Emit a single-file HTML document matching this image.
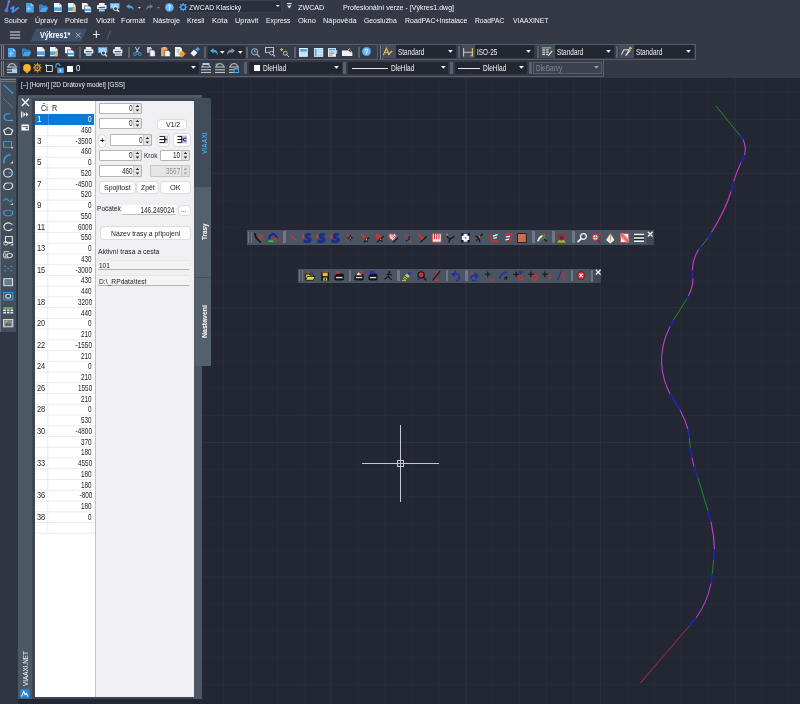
<!DOCTYPE html>
<html lang="cs"><head><meta charset="utf-8"><title>ZWCAD</title>
<style>
html,body{margin:0;padding:0;}
body{width:800px;height:704px;overflow:hidden;background:#222733;position:relative;font-family:"Liberation Sans",sans-serif;}
#r{position:absolute;left:0;top:0;width:800px;height:704px;overflow:hidden;will-change:transform;}
#r div,#r span,#r svg{position:absolute;display:block;}
#r span{white-space:nowrap;transform-origin:0 50%;filter:blur(0.25px);}
#r svg{filter:blur(0.25px);overflow:visible;}
</style></head>
<body><div id="r">
<svg style="left:0px;top:0px;" width="800" height="704" viewBox="0 0 800 704"><path d="M223.52 76V704" stroke="#282d39" stroke-width="1"/><path d="M250.44 76V704" stroke="#282d39" stroke-width="1"/><path d="M277.36 76V704" stroke="#282d39" stroke-width="1"/><path d="M304.28 76V704" stroke="#282d39" stroke-width="1"/><path d="M331.2 76V704" stroke="#2d3240" stroke-width="1"/><path d="M358.12 76V704" stroke="#282d39" stroke-width="1"/><path d="M385.04 76V704" stroke="#282d39" stroke-width="1"/><path d="M411.96 76V704" stroke="#282d39" stroke-width="1"/><path d="M438.88 76V704" stroke="#282d39" stroke-width="1"/><path d="M465.8 76V704" stroke="#2d3240" stroke-width="1"/><path d="M492.72 76V704" stroke="#282d39" stroke-width="1"/><path d="M519.64 76V704" stroke="#282d39" stroke-width="1"/><path d="M546.56 76V704" stroke="#282d39" stroke-width="1"/><path d="M573.48 76V704" stroke="#282d39" stroke-width="1"/><path d="M600.4 76V704" stroke="#2d3240" stroke-width="1"/><path d="M627.32 76V704" stroke="#282d39" stroke-width="1"/><path d="M654.24 76V704" stroke="#282d39" stroke-width="1"/><path d="M681.16 76V704" stroke="#282d39" stroke-width="1"/><path d="M708.08 76V704" stroke="#282d39" stroke-width="1"/><path d="M735 76V704" stroke="#2d3240" stroke-width="1"/><path d="M761.92 76V704" stroke="#282d39" stroke-width="1"/><path d="M788.84 76V704" stroke="#282d39" stroke-width="1"/><path d="M0 92.54H800" stroke="#282d39" stroke-width="1"/><path d="M0 119.46H800" stroke="#282d39" stroke-width="1"/><path d="M0 146.38H800" stroke="#282d39" stroke-width="1"/><path d="M0 173.3H800" stroke="#2d3240" stroke-width="1"/><path d="M0 200.22H800" stroke="#282d39" stroke-width="1"/><path d="M0 227.14H800" stroke="#282d39" stroke-width="1"/><path d="M0 254.06H800" stroke="#282d39" stroke-width="1"/><path d="M0 280.98H800" stroke="#282d39" stroke-width="1"/><path d="M0 307.9H800" stroke="#2d3240" stroke-width="1"/><path d="M0 334.82H800" stroke="#282d39" stroke-width="1"/><path d="M0 361.74H800" stroke="#282d39" stroke-width="1"/><path d="M0 388.66H800" stroke="#282d39" stroke-width="1"/><path d="M0 415.58H800" stroke="#282d39" stroke-width="1"/><path d="M0 442.5H800" stroke="#2d3240" stroke-width="1"/><path d="M0 469.42H800" stroke="#282d39" stroke-width="1"/><path d="M0 496.34H800" stroke="#282d39" stroke-width="1"/><path d="M0 523.26H800" stroke="#282d39" stroke-width="1"/><path d="M0 550.18H800" stroke="#282d39" stroke-width="1"/><path d="M0 577.1H800" stroke="#2d3240" stroke-width="1"/><path d="M0 604.02H800" stroke="#282d39" stroke-width="1"/><path d="M0 630.94H800" stroke="#282d39" stroke-width="1"/><path d="M0 657.86H800" stroke="#282d39" stroke-width="1"/><path d="M0 684.78H800" stroke="#282d39" stroke-width="1"/></svg>
<svg style="left:0px;top:0px;" width="800" height="704" viewBox="0 0 800 704"><path d="M716 106L740 135.5" stroke="#1f8f22" stroke-width="1" fill="none"/><path d="M740 135.5Q741.8 137.3 743 139.5" stroke="#1e26a4" stroke-width="2" fill="none"/><path d="M743 139.5Q746.6 146.5 744.5 155" stroke="#bd3cc6" stroke-width="1.15" fill="none"/><path d="M744.5 155Q743 158.5 741 162.5" stroke="#1e26a4" stroke-width="2" fill="none"/><path d="M741 162.5Q737 171 733.6 181.5" stroke="#bd3cc6" stroke-width="1.15" fill="none"/><path d="M733.6 181.5L731 191.5" stroke="#1e26a4" stroke-width="2" fill="none"/><path d="M731 191.5Q726 209 711.5 232.5" stroke="#bd3cc6" stroke-width="1.15" fill="none"/><path d="M711.5 232.5L708 238" stroke="#1e26a4" stroke-width="2" fill="none"/><path d="M708 238L701 246.5" stroke="#1f8f22" stroke-width="1" fill="none"/><path d="M701 246.5L698.6 249.5" stroke="#1e26a4" stroke-width="2" fill="none"/><path d="M698.6 249.5Q693 258 692.4 270" stroke="#bd3cc6" stroke-width="1.15" fill="none"/><path d="M692.4 270L692.9 278.5" stroke="#1e26a4" stroke-width="2" fill="none"/><path d="M692.9 278.5Q693.2 287 688.3 296" stroke="#bd3cc6" stroke-width="1.15" fill="none"/><path d="M688.3 296L687 298.8" stroke="#1e26a4" stroke-width="2" fill="none"/><path d="M687 298.8L673.5 320" stroke="#1f8f22" stroke-width="1" fill="none"/><path d="M673.5 320L670 326.5" stroke="#1e26a4" stroke-width="2" fill="none"/><path d="M670 326.5Q660.6 345 661.6 364Q662.5 379 670 394" stroke="#bd3cc6" stroke-width="1.15" fill="none"/><path d="M670 394L680 410" stroke="#1e26a4" stroke-width="2" fill="none"/><path d="M680 410Q685.4 420 688 429.5" stroke="#bd3cc6" stroke-width="1.15" fill="none"/><path d="M688 429.5L689.3 438" stroke="#1e26a4" stroke-width="2" fill="none"/><path d="M689.3 438L690.4 448" stroke="#1f8f22" stroke-width="1" fill="none"/><path d="M690.4 448L692 458" stroke="#1e26a4" stroke-width="2" fill="none"/><path d="M692 458L694 466.5" stroke="#bd3cc6" stroke-width="1.15" fill="none"/><path d="M694 466.5L698 478" stroke="#1e26a4" stroke-width="2" fill="none"/><path d="M698 478L708 511" stroke="#1f8f22" stroke-width="1" fill="none"/><path d="M708 511L711 522" stroke="#1e26a4" stroke-width="2" fill="none"/><path d="M711 522Q714.2 536 714.4 549" stroke="#bd3cc6" stroke-width="1.15" fill="none"/><path d="M714.4 549L713.6 560" stroke="#1e26a4" stroke-width="2" fill="none"/><path d="M713.6 560L712.4 573.5" stroke="#1f8f22" stroke-width="1" fill="none"/><path d="M712.4 573.5L711 583.5" stroke="#1e26a4" stroke-width="2" fill="none"/><path d="M711 583.5Q707 603 696 618" stroke="#bd3cc6" stroke-width="1.15" fill="none"/><path d="M696 618L689.6 625.6" stroke="#1e26a4" stroke-width="2" fill="none"/><path d="M689.6 625.6L640.4 683" stroke="#b42e2e" stroke-width="1" fill="none"/></svg>
<svg style="left:0px;top:0px;" width="800" height="704" viewBox="0 0 800 704"><path d="M400.5 425V502M362 463.5H439" stroke="#c6cad0" stroke-width="1"/><rect x="397.5" y="460.5" width="6" height="6" fill="none" stroke="#c6cad0" stroke-width="1"/></svg>
<span id="t0" style="left:20.6px;top:80.02px;font-size:7.8px;line-height:9px;color:#eef0f2;font-weight:normal;transform:scaleX(0.8231);">[&#8211;] [Horní] [2D Drátový model] [GSS]</span>
<div style="left:0px;top:0px;width:800px;height:77.7px;background:#343945;"></div>
<div style="left:176.7px;top:0px;width:105.8px;height:13.4px;background:#2a303b;box-sizing:border-box;border:1px solid #3a414d;"></div>
<span id="t1" style="left:188.6px;top:3.02px;font-size:7.8px;line-height:9px;color:#f2f3f5;font-weight:normal;transform:scaleX(0.8811);">ZWCAD Klasický</span>
<svg style="left:275.5px;top:5.46px;" width="3.6" height="2.09" viewBox="0 0 3.6 2.09"><path d="M0 0H3.6L1.8 2.09Z" fill="#fff"/></svg>
<span id="t2" style="left:298.3px;top:2.52px;font-size:8px;line-height:10px;color:#f6f7f8;font-weight:normal;transform:scaleX(0.8968);">ZWCAD</span>
<span id="t3" style="left:343.3px;top:2.52px;font-size:8px;line-height:10px;color:#f6f7f8;font-weight:normal;transform:scaleX(0.8828);">Profesionální verze - [Výkres1.dwg]</span>
<span id="t4" style="left:4px;top:15.52px;font-size:8.1px;line-height:10px;color:#f6f7f8;font-weight:normal;transform:scaleX(0.8962);">Soubor</span>
<span id="t5" style="left:35px;top:15.52px;font-size:8.1px;line-height:10px;color:#f6f7f8;font-weight:normal;transform:scaleX(0.8814);">Úpravy</span>
<span id="t6" style="left:65.2px;top:15.52px;font-size:8.1px;line-height:10px;color:#f6f7f8;font-weight:normal;transform:scaleX(0.9046);">Pohled</span>
<span id="t7" style="left:95.6px;top:15.52px;font-size:8.1px;line-height:10px;color:#f6f7f8;font-weight:normal;transform:scaleX(0.9496);">Vložit</span>
<span id="t8" style="left:121.4px;top:15.52px;font-size:8.1px;line-height:10px;color:#f6f7f8;font-weight:normal;transform:scaleX(0.9360);">Formát</span>
<span id="t9" style="left:152.6px;top:15.52px;font-size:8.1px;line-height:10px;color:#f6f7f8;font-weight:normal;transform:scaleX(0.8958);">Nástroje</span>
<span id="t10" style="left:187.2px;top:15.52px;font-size:8.1px;line-height:10px;color:#f6f7f8;font-weight:normal;transform:scaleX(0.8593);">Kresli</span>
<span id="t11" style="left:212.2px;top:15.52px;font-size:8.1px;line-height:10px;color:#f6f7f8;font-weight:normal;transform:scaleX(0.9426);">Kóta</span>
<span id="t12" style="left:235.1px;top:15.52px;font-size:8.1px;line-height:10px;color:#f6f7f8;font-weight:normal;transform:scaleX(0.9087);">Upravit</span>
<span id="t13" style="left:266px;top:15.52px;font-size:8.1px;line-height:10px;color:#f6f7f8;font-weight:normal;transform:scaleX(0.8342);">Express</span>
<span id="t14" style="left:297.6px;top:15.52px;font-size:8.1px;line-height:10px;color:#f6f7f8;font-weight:normal;transform:scaleX(0.9298);">Okno</span>
<span id="t15" style="left:323.2px;top:15.52px;font-size:8.1px;line-height:10px;color:#f6f7f8;font-weight:normal;transform:scaleX(0.9104);">Nápověda</span>
<span id="t16" style="left:363.9px;top:15.52px;font-size:8.1px;line-height:10px;color:#f6f7f8;font-weight:normal;transform:scaleX(0.8449);">Geoslužba</span>
<span id="t17" style="left:404.6px;top:15.52px;font-size:8.1px;line-height:10px;color:#f6f7f8;font-weight:normal;transform:scaleX(0.8591);">RoadPAC+Instalace</span>
<span id="t18" style="left:475.1px;top:15.52px;font-size:8.1px;line-height:10px;color:#f6f7f8;font-weight:normal;transform:scaleX(0.8279);">RoadPAC</span>
<span id="t19" style="left:513.1px;top:15.52px;font-size:8.1px;line-height:10px;color:#f6f7f8;font-weight:normal;transform:scaleX(0.8349);">VIAAXINET</span>
<svg style="left:10px;top:29px;" width="11" height="10" viewBox="0 0 11 10"><path d="M0 3H10.2M0 6H10.2M0 9H10.2" stroke="#dfe2e6" stroke-width="1.2"/></svg>
<svg style="left:30px;top:27.5px;" width="60" height="14" viewBox="0 0 60 14"><path d="M6 0.6H57L51.2 13.6H0.6Z" fill="#3e516b"/></svg>
<span id="t20" style="left:39.6px;top:30.02px;font-size:8.4px;line-height:10px;color:#fff;font-weight:bold;transform:scaleX(0.8558);">Výkres1*</span>
<svg style="left:74.5px;top:32px;" width="7" height="7" viewBox="0 0 7 7"><path d="M0.8 0.8L5.6 5.6M5.6 0.8L0.8 5.6" stroke="#aeb6c2" stroke-width="1"/></svg>
<span style="left:92.3px;top:27.2px;font-size:14px;line-height:14px;color:#e6e8ea;">+</span>
<svg style="left:106px;top:30px;" width="6" height="10" viewBox="0 0 6 10"><path d="M4.6 0.5L1 9.5" stroke="#59616d" stroke-width="1"/></svg>
<div style="left:0px;top:43.6px;width:377.5px;height:16.4px;background:#363b47;box-sizing:border-box;border:1px solid #565e6b;border-left:none;"></div>
<div style="left:378.5px;top:43.6px;width:317px;height:16.4px;background:#363b47;box-sizing:border-box;border:1px solid #565e6b;border-left:none;"></div>
<div style="left:0px;top:60px;width:604px;height:16.5px;background:#363b47;box-sizing:border-box;border:1px solid #565e6b;border-left:none;border-top:none;"></div>
<div style="left:1.3px;top:44.6px;width:0.8px;height:14.6px;background:#7a828e;"></div>
<div style="left:3.1px;top:44.6px;width:0.8px;height:14.6px;background:#7a828e;"></div>
<div style="left:379.8px;top:44.6px;width:0.8px;height:14.6px;background:#7a828e;"></div>
<div style="left:381.6px;top:44.6px;width:0.8px;height:14.6px;background:#7a828e;"></div>
<div style="left:1.3px;top:60.8px;width:0.8px;height:15px;background:#7a828e;"></div>
<div style="left:3.1px;top:60.8px;width:0.8px;height:15px;background:#7a828e;"></div>
<div style="left:6px;top:61.8px;width:12.4px;height:12.4px;background:#414955;"></div>
<div style="left:79px;top:46.5px;width:2px;height:11px;background:#59616d;"></div>
<div style="left:127.6px;top:46.5px;width:2px;height:11px;background:#59616d;"></div>
<div style="left:204.4px;top:46.5px;width:2px;height:11px;background:#59616d;"></div>
<div style="left:245.5px;top:46.5px;width:2px;height:11px;background:#59616d;"></div>
<div style="left:293.6px;top:46.5px;width:2px;height:11px;background:#59616d;"></div>
<div style="left:357.5px;top:46.5px;width:2px;height:11px;background:#59616d;"></div>
<div style="left:208px;top:45.5px;width:36.5px;height:13px;background:#262b35;"></div>
<svg style="left:219.7px;top:50.8px;" width="4.6" height="2.8" viewBox="0 0 4.6 2.8"><path d="M0 0H4.6L2.3 2.8Z" fill="#fff"/></svg>
<svg style="left:237.7px;top:50.8px;" width="4.6" height="2.8" viewBox="0 0 4.6 2.8"><path d="M0 0H4.6L2.3 2.8Z" fill="#fff"/></svg>
<div style="left:381.5px;top:45.3px;width:14.5px;height:13.2px;background:#454d59;"></div>
<div style="left:396px;top:45.4px;width:59.5px;height:12.6px;background:#222731;"></div>
<span id="t21" style="left:397.6px;top:47.52px;font-size:8.2px;line-height:10px;color:#f2f3f5;font-weight:normal;transform:scaleX(0.7913);">Standard</span>
<svg style="left:447.9px;top:50.11px;" width="4.8" height="2.78" viewBox="0 0 4.8 2.78"><path d="M0 0H4.8L2.4 2.78Z" fill="#fff"/></svg>
<div style="left:458px;top:46px;width:2px;height:12px;background:#59616d;"></div>
<div style="left:461.5px;top:45.3px;width:13.5px;height:13.2px;background:#454d59;"></div>
<div style="left:475px;top:45.4px;width:59px;height:12.6px;background:#222731;"></div>
<span id="t22" style="left:477.1px;top:47.52px;font-size:8.2px;line-height:10px;color:#f2f3f5;font-weight:normal;transform:scaleX(0.7822);">ISO-25</span>
<svg style="left:526.4px;top:50.11px;" width="4.8" height="2.78" viewBox="0 0 4.8 2.78"><path d="M0 0H4.8L2.4 2.78Z" fill="#fff"/></svg>
<div style="left:537px;top:46px;width:2px;height:12px;background:#59616d;"></div>
<div style="left:540px;top:45.3px;width:15px;height:13.2px;background:#454d59;"></div>
<div style="left:555px;top:45.4px;width:59px;height:12.6px;background:#222731;"></div>
<span id="t23" style="left:556.6px;top:47.52px;font-size:8.2px;line-height:10px;color:#f2f3f5;font-weight:normal;transform:scaleX(0.7913);">Standard</span>
<svg style="left:606.4px;top:50.11px;" width="4.8" height="2.78" viewBox="0 0 4.8 2.78"><path d="M0 0H4.8L2.4 2.78Z" fill="#fff"/></svg>
<div style="left:616px;top:46px;width:2px;height:12px;background:#59616d;"></div>
<div style="left:619px;top:45.3px;width:15px;height:13.2px;background:#454d59;"></div>
<div style="left:634px;top:45.4px;width:59.5px;height:12.6px;background:#222731;"></div>
<span id="t24" style="left:635.6px;top:47.52px;font-size:8.2px;line-height:10px;color:#f2f3f5;font-weight:normal;transform:scaleX(0.7913);">Standard</span>
<svg style="left:685.9px;top:50.11px;" width="4.8" height="2.78" viewBox="0 0 4.8 2.78"><path d="M0 0H4.8L2.4 2.78Z" fill="#fff"/></svg>
<div style="left:20px;top:61.6px;width:178.5px;height:12.2px;background:#222731;"></div>
<span id="t25" style="left:76.4px;top:63.52px;font-size:8.2px;line-height:10px;color:#f2f3f5;font-weight:normal;transform:scaleX(0.9644);">0</span>
<svg style="left:190.9px;top:66.11px;" width="4.8" height="2.78" viewBox="0 0 4.8 2.78"><path d="M0 0H4.8L2.4 2.78Z" fill="#fff"/></svg>
<div style="left:243.8px;top:62px;width:3px;height:12.4px;background:#59616d;"></div>
<div style="left:249px;top:61.6px;width:92.5px;height:12.2px;background:#222731;"></div>
<span id="t26" style="left:262.6px;top:63.52px;font-size:8.2px;line-height:10px;color:#f2f3f5;font-weight:normal;transform:scaleX(0.8000);">DleHlad</span>
<svg style="left:333.9px;top:66.11px;" width="4.8" height="2.78" viewBox="0 0 4.8 2.78"><path d="M0 0H4.8L2.4 2.78Z" fill="#fff"/></svg>
<div style="left:253.8px;top:64.8px;width:6.4px;height:6.4px;background:#fff;"></div>
<div style="left:342.6px;top:62px;width:3px;height:12.4px;background:#59616d;"></div>
<div style="left:347.6px;top:61.6px;width:100.9px;height:12.2px;background:#222731;"></div>
<span id="t27" style="left:390.6px;top:63.52px;font-size:8.2px;line-height:10px;color:#f2f3f5;font-weight:normal;transform:scaleX(0.8000);">DleHlad</span>
<svg style="left:440.9px;top:66.11px;" width="4.8" height="2.78" viewBox="0 0 4.8 2.78"><path d="M0 0H4.8L2.4 2.78Z" fill="#fff"/></svg>
<div style="left:351.5px;top:68px;width:36.5px;height:0.9px;background:#e6e8ea;"></div>
<div style="left:449.6px;top:62px;width:3px;height:12.4px;background:#59616d;"></div>
<div style="left:454.5px;top:61.6px;width:72px;height:12.2px;background:#222731;"></div>
<span id="t28" style="left:482.6px;top:63.52px;font-size:8.2px;line-height:10px;color:#f2f3f5;font-weight:normal;transform:scaleX(0.8000);">DleHlad</span>
<svg style="left:518.9px;top:66.11px;" width="4.8" height="2.78" viewBox="0 0 4.8 2.78"><path d="M0 0H4.8L2.4 2.78Z" fill="#fff"/></svg>
<div style="left:458px;top:68px;width:21.8px;height:0.9px;background:#e6e8ea;"></div>
<div style="left:528.8px;top:62px;width:3px;height:12.4px;background:#59616d;"></div>
<div style="left:533px;top:61.6px;width:69px;height:12.2px;background:#3b424e;box-sizing:border-box;border:1px solid #59616d;"></div>
<span id="t29" style="left:535.6px;top:63.52px;font-size:8.2px;line-height:10px;color:#7f8794;font-weight:normal;transform:scaleX(0.7917);">DleBarvy</span>
<svg style="left:594.4px;top:66.11px;" width="4.8" height="2.78" viewBox="0 0 4.8 2.78"><path d="M0 0H4.8L2.4 2.78Z" fill="#9aa1ac"/></svg>
<div style="left:0px;top:77.7px;width:17.6px;height:627px;background:#2f3641;"></div>
<div style="left:0px;top:77.9px;width:16.2px;height:253.7px;background:#444d5a;"></div>
<div style="left:0px;top:77.9px;width:0.9px;height:253.7px;background:#667080;"></div>
<div style="left:0.8px;top:79px;width:14.8px;height:0.9px;background:#7b838e;"></div>
<div style="left:0.8px;top:80.9px;width:14.8px;height:0.9px;background:#6b7480;"></div>
<svg style="left:4px;top:0px" width="15.6" height="13.4" viewBox="0 0 15.6 13.4"><path d="M4.8 1.4L2.8 9.8" stroke="#5a74f0" stroke-width="1.8" fill="none"/><circle cx="4.9" cy="1.5" r="1.3" fill="#6a84f5"/><circle cx="2.4" cy="10.6" r="2" fill="#5270ea"/><path d="M6.4 9L9.6 6.8L8.6 12L14.8 7.6" stroke="#468ee6" stroke-width="1.9" fill="none" stroke-linejoin="round"/></svg>
<svg style="left:25.8px;top:2.8px" width="7.8" height="9.4" viewBox="0 0 10 10" preserveAspectRatio="none"><path d="M0 0H6.4L10 3V10H0Z" fill="#4aa3e8"/><path d="M6.4 0L10 3H6.4Z" fill="#9fd0f7"/><path d="M3.6 3.6V8.6M1.2 6.1H6" stroke="#9fd0f7" stroke-width="1.3"/></svg>
<svg style="left:39px;top:3.6px" width="9.4" height="8" viewBox="0 0 10 10" preserveAspectRatio="none"><path d="M0 0.6H3.6L4.6 2H8.6V4H2.4L0 9.4Z" fill="#2f86d0"/><path d="M2.8 4.2H10L7.6 10H0.2Z" fill="#4aa3e8"/></svg>
<svg style="left:54px;top:3px" width="7.6" height="9" viewBox="0 0 10 10" preserveAspectRatio="none"><path d="M0 0H7L10 2.6V10H0Z" fill="#f1f3f5"/><rect x="0" y="4.8" width="10" height="4" fill="#4aa3e8"/><rect x="6.6" y="0" width="1" height="2.4" fill="#aeb6c2"/></svg>
<svg style="left:68px;top:3px" width="7.6" height="9" viewBox="0 0 10 10" preserveAspectRatio="none"><path d="M0 0H7L10 2.6V10H0Z" fill="#f1f3f5"/><rect x="0" y="4.8" width="10" height="4" fill="#4aa3e8"/><rect x="6.6" y="0" width="1" height="2.4" fill="#aeb6c2"/><path d="M6.4 6.2L10 5L9.4 10L5.6 9.4Z" fill="#f0c040"/></svg>
<svg style="left:82px;top:2.8px" width="9.2" height="9.6" viewBox="0 0 10 10" preserveAspectRatio="none"><path d="M0 0H5L6.6 1.6V6.4H0Z" fill="#f1f3f5"/><path d="M2.8 3H8L10 5V10H2.8Z" fill="#f1f3f5" stroke="#333a46" stroke-width="0.6"/><rect x="2.8" y="6" width="7.2" height="2.2" fill="#4aa3e8"/></svg>
<svg style="left:96.6px;top:3.3px" width="9.6" height="8.4" viewBox="0 0 10 10" preserveAspectRatio="none"><rect x="2" y="0" width="6" height="2.6" fill="#f1f3f5"/><rect x="0" y="2.4" width="10" height="4.8" rx="0.8" fill="#f1f3f5"/><rect x="1.6" y="4.6" width="6.8" height="1.2" fill="#3a4250"/><rect x="2" y="6" width="6" height="4" fill="#9fd0f7"/><rect x="2.8" y="7.4" width="4.4" height="1" fill="#4aa3e8"/></svg>
<svg style="left:110.2px;top:3px" width="9.6" height="8.8" viewBox="0 0 10 10" preserveAspectRatio="none"><rect x="0" y="0" width="10" height="6.4" fill="#4aa3e8"/><rect x="0.9" y="1" width="8.2" height="4.4" fill="#9fd0f7"/><circle cx="5.8" cy="6.4" r="2.2" fill="#3a4250" stroke="#f1f3f5" stroke-width="1"/><path d="M7.4 8L9.6 10" stroke="#f1f3f5" stroke-width="1.3"/></svg>
<svg style="left:126px;top:4.2px" width="7.6" height="6.2" viewBox="0 0 10 10" preserveAspectRatio="none"><path d="M0 4L4.4 0V2.6Q10 2.6 10 10Q8 5.6 4.4 5.6V8Z" fill="#4aa3e8"/></svg>
<svg style="left:137.8px;top:6.6px;" width="2.8" height="1.8" viewBox="0 0 2.8 1.8"><path d="M0 0H2.8L1.4 1.8Z" fill="#dfe2e6"/></svg>
<svg style="left:145.8px;top:4.2px" width="7.2" height="6.2" viewBox="0 0 10 10" preserveAspectRatio="none"><path d="M10 4L5.6 0V2.6Q0 2.6 0 10Q2 5.6 5.6 5.6V8Z" fill="#6d7683"/></svg>
<svg style="left:157.2px;top:6.6px;" width="2.8" height="1.8" viewBox="0 0 2.8 1.8"><path d="M0 0H2.8L1.4 1.8Z" fill="#7c8592"/></svg>
<svg style="left:164.8px;top:2.6px" width="8.8" height="8.8" viewBox="0 0 10 10" preserveAspectRatio="none"><circle cx="5" cy="5" r="5" fill="#4aa3e8"/><circle cx="5" cy="5" r="3.9" fill="#6db9f2"/><path d="M3.6 4Q3.6 2.4 5 2.4Q6.5 2.4 6.5 3.8Q6.5 4.8 5 5.4V6.3" stroke="#fff" stroke-width="1" fill="none"/><rect x="4.5" y="7" width="1" height="1" fill="#fff"/></svg>
<svg style="left:178.8px;top:2.6px" width="8.4" height="8.4" viewBox="0 0 10 10" preserveAspectRatio="none"><rect x="4.2" y="0" width="1.6" height="10" fill="#4aa3e8" transform="rotate(0 5 5)"/><rect x="4.2" y="0" width="1.6" height="10" fill="#4aa3e8" transform="rotate(45 5 5)"/><rect x="4.2" y="0" width="1.6" height="10" fill="#4aa3e8" transform="rotate(90 5 5)"/><rect x="4.2" y="0" width="1.6" height="10" fill="#4aa3e8" transform="rotate(135 5 5)"/><circle cx="5" cy="5" r="3.4" fill="#4aa3e8"/><circle cx="5" cy="5" r="1.9" fill="#2a303b"/></svg>
<svg style="left:286.6px;top:3.4px;" width="5" height="7" viewBox="0 0 5 7"><rect x="0" y="0" width="4.6" height="1.2" fill="#dfe2e6"/><path d="M0 2.6H4.6L2.3 5.6Z" fill="#dfe2e6"/></svg>
<svg style="left:8.2px;top:47.6px" width="7.8" height="9.2" viewBox="0 0 10 10" preserveAspectRatio="none"><path d="M0 0H6.4L10 3V10H0Z" fill="#4aa3e8"/><path d="M6.4 0L10 3H6.4Z" fill="#9fd0f7"/><path d="M3.6 3.6V8.6M1.2 6.1H6" stroke="#9fd0f7" stroke-width="1.3"/></svg>
<svg style="left:22px;top:47.8px" width="9.4" height="8.2" viewBox="0 0 10 10" preserveAspectRatio="none"><path d="M0 0.6H3.6L4.6 2H8.6V4H2.4L0 9.4Z" fill="#2f86d0"/><path d="M2.8 4.2H10L7.6 10H0.2Z" fill="#4aa3e8"/></svg>
<svg style="left:37px;top:47.2px" width="7.6" height="9.2" viewBox="0 0 10 10" preserveAspectRatio="none"><path d="M0 0H7L10 2.6V10H0Z" fill="#f1f3f5"/><rect x="0" y="4.8" width="10" height="4" fill="#4aa3e8"/><rect x="6.6" y="0" width="1" height="2.4" fill="#aeb6c2"/></svg>
<svg style="left:50.4px;top:47.2px" width="7.6" height="9.2" viewBox="0 0 10 10" preserveAspectRatio="none"><path d="M0 0H7L10 2.6V10H0Z" fill="#f1f3f5"/><rect x="0" y="4.8" width="10" height="4" fill="#4aa3e8"/><rect x="6.6" y="0" width="1" height="2.4" fill="#aeb6c2"/><path d="M6.4 6.2L10 5L9.4 10L5.6 9.4Z" fill="#f0c040"/></svg>
<svg style="left:65px;top:47px" width="9.2" height="9.6" viewBox="0 0 10 10" preserveAspectRatio="none"><path d="M0 0H5L6.6 1.6V6.4H0Z" fill="#f1f3f5"/><path d="M2.8 3H8L10 5V10H2.8Z" fill="#f1f3f5" stroke="#333a46" stroke-width="0.6"/><rect x="2.8" y="6" width="7.2" height="2.2" fill="#4aa3e8"/></svg>
<svg style="left:84px;top:47.4px" width="9.4" height="9" viewBox="0 0 10 10" preserveAspectRatio="none"><rect x="2" y="0" width="6" height="2.6" fill="#f1f3f5"/><rect x="0" y="2.4" width="10" height="4.8" rx="0.8" fill="#f1f3f5"/><rect x="1.6" y="4.6" width="6.8" height="1.2" fill="#3a4250"/><rect x="2" y="6" width="6" height="4" fill="#9fd0f7"/><rect x="2.8" y="7.4" width="4.4" height="1" fill="#4aa3e8"/></svg>
<svg style="left:98.4px;top:47.2px" width="9.4" height="9.4" viewBox="0 0 10 10" preserveAspectRatio="none"><rect x="0" y="0" width="10" height="6.4" fill="#4aa3e8"/><rect x="0.9" y="1" width="8.2" height="4.4" fill="#9fd0f7"/><circle cx="5.8" cy="6.4" r="2.2" fill="#3a4250" stroke="#f1f3f5" stroke-width="1"/><path d="M7.4 8L9.6 10" stroke="#f1f3f5" stroke-width="1.3"/></svg>
<svg style="left:113px;top:47.4px" width="9.4" height="9" viewBox="0 0 10 10" preserveAspectRatio="none"><rect x="2" y="0" width="6" height="2.6" fill="#f1f3f5"/><rect x="0" y="2.4" width="10" height="4.8" rx="0.8" fill="#f1f3f5"/><rect x="1.6" y="4.6" width="6.8" height="1.2" fill="#3a4250"/><rect x="2" y="6" width="6" height="4" fill="#9fd0f7"/><rect x="2.8" y="7.4" width="4.4" height="1" fill="#4aa3e8"/><circle cx="8.6" cy="8.8" r="1.2" fill="#f0c040"/></svg>
<svg style="left:133px;top:47.4px" width="8.6" height="9.2" viewBox="0 0 10 10" preserveAspectRatio="none"><path d="M2.6 0L6.4 6M7.4 0L3.6 6" stroke="#9fd0f7" stroke-width="1.1" fill="none"/><circle cx="2.2" cy="7.7" r="1.6" fill="none" stroke="#4aa3e8" stroke-width="1"/><circle cx="7.8" cy="7.7" r="1.6" fill="none" stroke="#4aa3e8" stroke-width="1"/></svg>
<svg style="left:147.4px;top:47px" width="8.2" height="9.6" viewBox="0 0 10 10" preserveAspectRatio="none"><path d="M0 0H4.6L6 1.6V6H0Z" fill="#c6cbd3"/><path d="M3.4 3H8.2L10 5V10H3.4Z" fill="#f1f3f5" stroke="#363d49" stroke-width="0.7"/></svg>
<svg style="left:161px;top:47px" width="9.2" height="9.6" viewBox="0 0 10 10" preserveAspectRatio="none"><rect x="0" y="0.6" width="7" height="9" rx="0.6" fill="#e8a055"/><rect x="2" y="0" width="3" height="1.6" fill="#c6cbd3"/><path d="M4 3.6H8.4L10 5.4V10H4Z" fill="#f1f3f5" stroke="#363d49" stroke-width="0.6"/></svg>
<svg style="left:175.4px;top:47px" width="10" height="9.8" viewBox="0 0 10 10" preserveAspectRatio="none"><path d="M0 0H5.2L7 1.8V9.6H0Z" fill="#f1f3f5"/><path d="M1.4 3H5M1.4 5H4.4" stroke="#8d96a3" stroke-width="0.8"/><circle cx="7" cy="7" r="2.6" fill="#f0a830"/><circle cx="7" cy="7" r="1" fill="#363d49"/><path d="M7 3.6V10.4M3.6 7H10.4" stroke="#f0a830" stroke-width="1.1"/></svg>
<svg style="left:190px;top:47px" width="10" height="9.6" viewBox="0 0 10 10" preserveAspectRatio="none"><path d="M0.4 6.4L4 2.6L7.4 6L3.8 9.8Z" fill="#f1f3f5"/><path d="M5.2 2.4L7.6 0L10 2.4L7.6 4.8Z" fill="#4aa3e8"/></svg>
<svg style="left:209.6px;top:48.4px" width="8" height="7" viewBox="0 0 10 10" preserveAspectRatio="none"><path d="M0 4L4.4 0V2.6Q10 2.6 10 10Q8 5.6 4.4 5.6V8Z" fill="#4aa3e8"/></svg>
<svg style="left:227.4px;top:48.4px" width="8" height="7" viewBox="0 0 10 10" preserveAspectRatio="none"><path d="M10 4L5.6 0V2.6Q0 2.6 0 10Q2 5.6 5.6 5.6V8Z" fill="#8790a0"/></svg>
<svg style="left:251px;top:47.8px" width="8.8" height="9" viewBox="0 0 10 10" preserveAspectRatio="none"><circle cx="4.2" cy="4.2" r="3.5" fill="none" stroke="#9fd0f7" stroke-width="1"/><path d="M4.2 2V4.4H6" stroke="#9fd0f7" stroke-width="0.9" fill="none"/><path d="M6.8 7L9.6 9.8" stroke="#c6cbd3" stroke-width="1.2"/></svg>
<svg style="left:265px;top:47.4px" width="10" height="9.4" viewBox="0 0 10 10" preserveAspectRatio="none"><rect x="0.5" y="0.5" width="8" height="5.2" fill="none" stroke="#c6cbd3" stroke-width="1"/><circle cx="6.6" cy="6.4" r="2" fill="#363d49" stroke="#c6cbd3" stroke-width="0.9"/><path d="M8 8L10 10" stroke="#c6cbd3" stroke-width="1.1"/></svg>
<svg style="left:280px;top:47.6px" width="9" height="9" viewBox="0 0 10 10" preserveAspectRatio="none"><path d="M1.8 0V3.6M0 1.8H3.6" stroke="#f0c040" stroke-width="1"/><circle cx="5.8" cy="5.8" r="2.2" fill="none" stroke="#c6cbd3" stroke-width="1"/><path d="M7.4 7.4L10 10" stroke="#c6cbd3" stroke-width="1.1"/></svg>
<svg style="left:299.4px;top:48px" width="8.8" height="8.8" viewBox="0 0 10 10" preserveAspectRatio="none"><rect width="10" height="10" fill="#f1f3f5"/><rect x="1" y="1.2" width="8" height="3" fill="#4aa3e8"/><path d="M1 5.8H9M1 7.8H9" stroke="#9fd0f7" stroke-width="1"/></svg>
<svg style="left:314px;top:48px" width="9.2" height="8.8" viewBox="0 0 10 10" preserveAspectRatio="none"><rect width="10" height="10" fill="#f1f3f5"/><rect x="3.6" y="0.8" width="5.6" height="8.4" fill="#9fd0f7"/><path d="M3.6 3.4H9.2M3.6 6.2H9.2M6.4 0.8V9.2" stroke="#f1f3f5" stroke-width="0.7"/><rect x="0.8" y="0.8" width="2" height="8.4" fill="#4aa3e8"/></svg>
<svg style="left:328px;top:48px" width="9.2" height="8.8" viewBox="0 0 10 10" preserveAspectRatio="none"><rect width="8.6" height="10" fill="#f1f3f5"/><rect x="0.8" y="0.8" width="7" height="2" fill="#4aa3e8"/><path d="M1 4.6H7M1 6.4H7M1 8.2H5" stroke="#6d7683" stroke-width="0.8"/><rect x="8.2" y="2.4" width="1.8" height="4" fill="#9fd0f7"/></svg>
<svg style="left:342px;top:48px" width="10.4" height="8" viewBox="0 0 10 10" preserveAspectRatio="none"><path d="M0 3H5.4L7 0L10 6V10H0Z" fill="#f1f3f5"/><path d="M5.8 3.4L7.2 0.8L9.4 5.6Z" fill="#363d49"/></svg>
<svg style="left:362px;top:47.2px" width="9" height="9" viewBox="0 0 10 10" preserveAspectRatio="none"><circle cx="5" cy="5" r="5" fill="#4aa3e8"/><circle cx="5" cy="5" r="3.9" fill="#6db9f2"/><path d="M3.6 4Q3.6 2.4 5 2.4Q6.5 2.4 6.5 3.8Q6.5 4.8 5 5.4V6.3" stroke="#fff" stroke-width="1" fill="none"/><rect x="4.5" y="7" width="1" height="1" fill="#fff"/></svg>
<svg style="left:383.4px;top:48.4px" width="9.4" height="7.6" viewBox="0 0 10 10" preserveAspectRatio="none"><path d="M0.4 9.4L3.6 0.6L6.8 9.4M1.6 6.4H5.6" stroke="#f0c040" stroke-width="1.3" fill="none"/><path d="M5.6 9L9.8 3.8" stroke="#c6cbd3" stroke-width="1.2"/></svg>
<svg style="left:463.4px;top:47.6px" width="10" height="8.6" viewBox="0 0 10 10" preserveAspectRatio="none"><path d="M0.6 0V10M9.4 0V10" stroke="#f0c040" stroke-width="1.1"/><path d="M0.6 5H9.4" stroke="#c6cbd3" stroke-width="1"/><path d="M7 9.6L9.8 6.6" stroke="#c6cbd3" stroke-width="0.9"/></svg>
<svg style="left:542px;top:47.2px" width="10.4" height="9.2" viewBox="0 0 10 10" preserveAspectRatio="none"><rect x="0" y="0.2" width="9" height="1.5" fill="#6fc060"/><path d="M0.4 3.2H3M0.4 5.6H3M0.4 8H3M4 3.2H6.4M4 5.6H6.4M4 8H5.6" stroke="#dfe2e6" stroke-width="1.4"/><path d="M6 9.4L9.8 4.2" stroke="#dfe2e6" stroke-width="1.2"/></svg>
<svg style="left:621px;top:47.4px" width="10.4" height="9" viewBox="0 0 10 10" preserveAspectRatio="none"><path d="M0.4 8.4L2.8 3H7.6L5.4 8.4" stroke="#dfe2e6" stroke-width="1" fill="none"/><path d="M4.4 9.6L9 3.6" stroke="#dfe2e6" stroke-width="1.1"/><circle cx="9" cy="1.4" r="1.3" fill="#f0c040"/></svg>
<svg style="left:7px;top:63px" width="10" height="10" viewBox="0 0 10 10" preserveAspectRatio="none"><path d="M1.4 3.6Q1.4 0.6 5 0.6Q8.6 0.6 8.6 3.6" fill="none" stroke="#dfe2e6" stroke-width="0.9"/><path d="M0 4H10M0 6.8H10M0 9.4H10" stroke="#dfe2e6" stroke-width="0.9"/><rect x="5" y="5.4" width="5" height="4.6" fill="#9fd0f7"/></svg>
<svg style="left:22.8px;top:63.6px;" width="8" height="10" viewBox="0 0 8 10"><circle cx="4" cy="4" r="3.9" fill="#f7b52c"/><rect x="2.8" y="7.4" width="2.4" height="1.8" fill="#d89a28"/></svg>
<svg style="left:33px;top:63px" width="8.8" height="9.6" viewBox="0 0 10 10" preserveAspectRatio="none"><path d="M5 0V10M0 5H10M1.4 1.4L8.6 8.6M8.6 1.4L1.4 8.6" stroke="#f0a02a" stroke-width="1.1"/><circle cx="5" cy="5" r="3" fill="#363d49" stroke="#f0a02a" stroke-width="1.2"/><circle cx="5" cy="5" r="1.1" fill="#f0a02a"/></svg>
<svg style="left:44.6px;top:64.2px" width="7.8" height="8" viewBox="0 0 10 10" preserveAspectRatio="none"><rect x="2" y="2" width="7.4" height="7.4" fill="none" stroke="#e6e8ea" stroke-width="1.1"/><path d="M0 2H3.4M1.8 0V3.6" stroke="#e6e8ea" stroke-width="0.9"/></svg>
<svg style="left:55px;top:62.8px" width="8.8" height="10.2" viewBox="0 0 10 10" preserveAspectRatio="none"><path d="M1 5V3Q1 0.6 3.2 0.6Q5.4 0.6 5.4 3" fill="none" stroke="#4aa3e8" stroke-width="1.2"/><rect x="2.6" y="4.6" width="7.4" height="5.4" fill="#4aa3e8"/><rect x="5.4" y="6.4" width="1.8" height="2" fill="#d8ecfb"/></svg>
<div style="left:67px;top:65.6px;width:6.2px;height:6.2px;background:#fff;"></div>
<svg style="left:201px;top:63px" width="10" height="10" viewBox="0 0 10 10" preserveAspectRatio="none"><path d="M1.4 3.6Q1.4 0.6 5 0.6Q8.6 0.6 8.6 3.6" fill="none" stroke="#dfe2e6" stroke-width="0.9"/><path d="M0 4H10M0 6.8H10M0 9.4H10" stroke="#dfe2e6" stroke-width="0.9"/><rect x="1.6" y="0" width="6.8" height="2" fill="#9fd0f7"/></svg>
<svg style="left:215px;top:63px" width="10" height="10" viewBox="0 0 10 10" preserveAspectRatio="none"><path d="M1.4 3.6Q1.4 0.6 5 0.6Q8.6 0.6 8.6 3.6" fill="none" stroke="#dfe2e6" stroke-width="0.9"/><path d="M0 4H10M0 6.8H10M0 9.4H10" stroke="#dfe2e6" stroke-width="0.9"/><path d="M0.4 1.4H4M2.2 0V2.8" stroke="#6fc060" stroke-width="1"/></svg>
<svg style="left:229.4px;top:63px" width="10" height="10" viewBox="0 0 10 10" preserveAspectRatio="none"><path d="M1.4 3.6Q1.4 0.6 5 0.6Q8.6 0.6 8.6 3.6" fill="none" stroke="#dfe2e6" stroke-width="0.9"/><path d="M0 4H10M0 6.8H10M0 9.4H10" stroke="#dfe2e6" stroke-width="0.9"/><rect x="4.6" y="5.2" width="5.4" height="4.8" fill="#4aa3e8"/><rect x="5.6" y="6.6" width="3.4" height="2.4" fill="#363d49"/></svg>
<svg style="left:2.6px;top:84.4px" width="10.4" height="10" viewBox="0 0 10 10" preserveAspectRatio="none"><path d="M0.6 0.6L9.4 9.4" stroke="#3aa0e6" stroke-width="1.1"/><circle cx="9" cy="9" r="0.9" fill="#3aa0e6"/></svg>
<svg style="left:2.6px;top:98.4px" width="10.4" height="10" viewBox="0 0 10 10" preserveAspectRatio="none"><path d="M0.4 0.4L9.6 9.6" stroke="#3aa0e6" stroke-width="0.9" stroke-dasharray="2.2 0.8"/></svg>
<svg style="left:2.6px;top:113.2px" width="10.4" height="8.6" viewBox="0 0 10 10" preserveAspectRatio="none"><path d="M7 0.9Q1.2 0.2 1 4.6Q1 8.8 5 8.8L9 8.8" fill="none" stroke="#3aa0e6" stroke-width="1.3"/><circle cx="8.6" cy="8.6" r="1.1" fill="#3aa0e6"/></svg>
<svg style="left:2.6px;top:127.2px" width="10.4" height="8.2" viewBox="0 0 10 10" preserveAspectRatio="none"><path d="M5 0.7L9.4 4L7.7 9.3H2.3L0.6 4Z" fill="none" stroke="#e6e8ea" stroke-width="1.2"/></svg>
<svg style="left:2.6px;top:141px" width="10.4" height="7.6" viewBox="0 0 10 10" preserveAspectRatio="none"><rect x="0.6" y="0.8" width="7.6" height="7.4" fill="none" stroke="#3aa0e6" stroke-width="1.1"/><circle cx="8.8" cy="8.8" r="1" fill="#e6e8ea"/></svg>
<svg style="left:2.6px;top:153.6px" width="10.4" height="10" viewBox="0 0 10 10" preserveAspectRatio="none"><path d="M0.6 9.4Q0.6 1 7.4 0.8" fill="none" stroke="#3aa0e6" stroke-width="1.5"/><path d="M9.6 7L9.6 9.6L7 9.6Z" fill="#e6e8ea"/></svg>
<svg style="left:2.6px;top:167.7px" width="10.4" height="9.8" viewBox="0 0 10 10" preserveAspectRatio="none"><circle cx="4.8" cy="5" r="4.2" fill="none" stroke="#e6e8ea" stroke-width="1.1"/><path d="M4.8 5H9.6" stroke="#3aa0e6" stroke-width="1"/></svg>
<svg style="left:2.6px;top:181.6px" width="10.4" height="8.4" viewBox="0 0 10 10" preserveAspectRatio="none"><path d="M1.4 3.4Q2 0.6 5 1.4Q8.6 0.2 9.2 3.4Q9.8 7 6.4 8.6Q2.8 10 1 7.4Q0 5 1.4 3.4Z" fill="none" stroke="#e6e8ea" stroke-width="1.1"/></svg>
<svg style="left:2.6px;top:196.6px" width="10.4" height="8.4" viewBox="0 0 10 10" preserveAspectRatio="none"><path d="M0.6 4.4Q2.4 0 4.8 3.6Q7 7.4 9 3" fill="none" stroke="#3aa0e6" stroke-width="1.3"/><path d="M9.6 7L9.6 9.6L7 9.6Z" fill="#e6e8ea"/></svg>
<svg style="left:2.6px;top:209.4px" width="10.4" height="8" viewBox="0 0 10 10" preserveAspectRatio="none"><ellipse cx="5" cy="5" rx="4.4" ry="3.6" fill="none" stroke="#3aa0e6" stroke-width="1.2"/></svg>
<svg style="left:2.6px;top:222.2px" width="10.4" height="9.6" viewBox="0 0 10 10" preserveAspectRatio="none"><path d="M8.8 2.6Q5.6 -0.4 2.2 2Q-0.6 5 2.2 8Q5.6 10.4 9 7.2" fill="none" stroke="#e6e8ea" stroke-width="1.1"/><circle cx="9" cy="2.6" r="0.9" fill="#3aa0e6"/></svg>
<svg style="left:2.6px;top:236.2px" width="10.4" height="9.8" viewBox="0 0 10 10" preserveAspectRatio="none"><rect x="2.4" y="0.6" width="6.6" height="6" fill="none" stroke="#e6e8ea" stroke-width="1"/><circle cx="2.6" cy="7.4" r="1.9" fill="none" stroke="#e6e8ea" stroke-width="0.9"/><path d="M4.8 7.4H8" stroke="#e6e8ea" stroke-width="0.9"/><path d="M9.8 7.2V9.8H7.2Z" fill="#e6e8ea"/></svg>
<svg style="left:2.6px;top:250.8px" width="10.4" height="8" viewBox="0 0 10 10" preserveAspectRatio="none"><path d="M1 2.4V0.8H6" fill="none" stroke="#e6e8ea" stroke-width="0.9"/><circle cx="6.4" cy="5.6" r="2.6" fill="none" stroke="#e6e8ea" stroke-width="1"/><path d="M0.6 8.6H6" stroke="#e6e8ea" stroke-width="0.9"/><rect x="0.4" y="3.6" width="2.4" height="3.4" fill="none" stroke="#e6e8ea" stroke-width="0.8"/></svg>
<svg style="left:2.6px;top:265px" width="10.4" height="7.4" viewBox="0 0 10 10" preserveAspectRatio="none"><circle cx="2" cy="2" r="0.9" fill="#3aa0e6"/><circle cx="8" cy="2" r="0.9" fill="#3aa0e6"/><circle cx="5" cy="5" r="0.9" fill="#3aa0e6"/><circle cx="2" cy="8" r="0.9" fill="#3aa0e6"/><circle cx="8" cy="8" r="0.9" fill="#3aa0e6"/></svg>
<svg style="left:2.6px;top:278.2px" width="10.4" height="8.4" viewBox="0 0 10 10" preserveAspectRatio="none"><rect x="0.8" y="0.8" width="8.4" height="8.4" fill="#5f7e94" stroke="#e6e8ea" stroke-width="1"/></svg>
<svg style="left:2.6px;top:291.8px" width="10.4" height="8.4" viewBox="0 0 10 10" preserveAspectRatio="none"><rect x="0.6" y="0.6" width="8.8" height="8.8" fill="none" stroke="#3aa0e6" stroke-width="1.1"/><circle cx="5" cy="5" r="2.4" fill="none" stroke="#e6e8ea" stroke-width="1"/></svg>
<svg style="left:2.6px;top:306.8px" width="10.4" height="7" viewBox="0 0 10 10" preserveAspectRatio="none"><rect x="0.2" y="0.4" width="9.6" height="2.2" fill="#6fc060"/><path d="M0.2 3.4H2.8V5.8H0.2ZM3.7 3.4H6.3V5.8H3.7ZM7.2 3.4H9.8V5.8H7.2ZM0.2 6.8H2.8V9.2H0.2ZM3.7 6.8H6.3V9.2H3.7ZM7.2 6.8H9.8V9.2H7.2Z" fill="#e6e8ea"/></svg>
<svg style="left:2.6px;top:319.4px" width="10.4" height="8.4" viewBox="0 0 10 10" preserveAspectRatio="none"><rect x="0.6" y="0.6" width="8.8" height="8.8" fill="#7d8894" stroke="#e6e8ea" stroke-width="1"/><path d="M2 7.6L4 4.6L5.4 6.4L6.6 5.2L8 7.6Z" fill="#4d5865"/><circle cx="3.2" cy="3" r="0.9" fill="#f0c040"/></svg>
<div style="left:18px;top:95.3px;width:183.8px;height:603.7px;background:#4d5865;border-radius:2px 0 0 1px;"></div>
<div style="left:32.4px;top:97.8px;width:162px;height:3.2px;background:#3f4854;"></div>
<div style="left:32.4px;top:100px;width:3px;height:599px;background:#3d4652;"></div>
<div style="left:32.4px;top:696.8px;width:161px;height:2.2px;background:#3d4652;"></div>
<div style="left:193.8px;top:98px;width:16.8px;height:89px;background:#434c59;border-radius:0 2px 0 0;"></div>
<div style="left:193.6px;top:187px;width:17px;height:89.8px;background:#55606d;"></div>
<div style="left:193.6px;top:277.3px;width:17px;height:88.7px;background:#55606d;"></div>
<div style="left:193.6px;top:276.6px;width:16.8px;height:0.8px;background:#444d59;"></div>
<span id="t30" style="left:199.86px;top:153.8px;font-size:7.4px;line-height:9px;color:#3fa3df;font-weight:bold;transform-origin:0 0;transform:rotate(-90deg) scaleX(0.8725);">VIAAXI</span>
<span id="t31" style="left:199.79px;top:240.2px;font-size:7.2px;line-height:9px;color:#fff;font-weight:bold;transform-origin:0 0;transform:rotate(-90deg) scaleX(0.8831);">Trasy</span>
<span id="t32" style="left:199.79px;top:337.6px;font-size:7.2px;line-height:9px;color:#fff;font-weight:bold;transform-origin:0 0;transform:rotate(-90deg) scaleX(0.9715);">Nastavení</span>
<svg style="left:20.6px;top:97.6px;" width="9" height="9" viewBox="0 0 9 9"><path d="M0.8 0.8L8 8M8 0.8L0.8 8" stroke="#fff" stroke-width="1.3"/></svg>
<svg style="left:20.8px;top:110.6px;" width="8" height="7" viewBox="0 0 8 7"><path d="M0.7 0.4V6.4" stroke="#fff" stroke-width="1.2"/><path d="M2.4 1L4.6 3.4L2.4 5.8ZM5 1L7.4 3.4L5 5.8Z" fill="#fff"/></svg>
<svg style="left:20.8px;top:123.6px;" width="8.4" height="7" viewBox="0 0 8.4 7"><rect x="0.5" y="0.5" width="7.4" height="6" fill="#fff"/><rect x="1.4" y="2.2" width="5.6" height="0.9" fill="#4d5865"/><rect x="4.6" y="3.6" width="2.2" height="1.6" fill="#4d5865"/></svg>
<span id="t33" style="left:20.99px;top:686.4px;font-size:7.2px;line-height:9px;color:#fff;font-weight:normal;transform-origin:0 0;transform:rotate(-90deg) scaleX(0.8800);">VIAAXI.NET</span>
<svg style="left:20px;top:688.6px;" width="9.6" height="9.2" viewBox="0 0 9.6 9.2"><rect width="9.6" height="9.2" rx="1" fill="#1f86dc"/><path d="M1.6 7.4L3.8 2.2L5 5.6L6.2 4.4L8 7.4" stroke="#fff" stroke-width="1.1" fill="none"/></svg>
<div style="left:35.2px;top:101px;width:59.6px;height:596px;background:#fff;"></div>
<span id="t34" style="left:40.6px;top:103.02px;font-size:8.5px;line-height:10px;color:#222;font-weight:normal;transform:scaleX(0.8467);">Či</span>
<span id="t35" style="left:52.4px;top:103.02px;font-size:8.5px;line-height:10px;color:#222;font-weight:normal;transform:scaleX(0.8468);">R</span>
<svg style="left:35.2px;top:114px;" width="59.6" height="420.05" viewBox="0 0 59.6 420.05"><path d="M0 0.2H59.6M0 10.94H59.6M0 21.69H59.6M0 32.44H59.6M0 43.18H59.6M0 53.92H59.6M0 64.67H59.6M0 75.41H59.6M0 86.16H59.6M0 96.91H59.6M0 107.65H59.6M0 118.39H59.6M0 129.14H59.6M0 139.88H59.6M0 150.63H59.6M0 161.37H59.6M0 172.12H59.6M0 182.86H59.6M0 193.61H59.6M0 204.35H59.6M0 215.1H59.6M0 225.84H59.6M0 236.59H59.6M0 247.33H59.6M0 258.08H59.6M0 268.82H59.6M0 279.57H59.6M0 290.31H59.6M0 301.06H59.6M0 311.8H59.6M0 322.55H59.6M0 333.29H59.6M0 344.04H59.6M0 354.78H59.6M0 365.53H59.6M0 376.27H59.6M0 387.02H59.6M0 397.76H59.6M0 408.51H59.6M0 419.25H59.6M12.8 0V419.05" stroke="#e6e6e6" stroke-width="0.8" fill="none"/></svg>
<div style="left:35.2px;top:114.2px;width:59.2px;height:10.34px;background:#0a78d7;"></div>
<div style="left:47.6px;top:114.2px;width:0.8px;height:10.34px;background:#3a93e0;"></div>
<span id="t36" style="left:37px;top:114.02px;font-size:8.5px;line-height:10px;color:#fff;font-weight:normal;transform:scaleX(0.9505);">1</span>
<span style="right:708px;top:114.52px;font-size:8.2px;line-height:10px;color:#fff;font-weight:normal;transform-origin:100% 50%;transform:scaleX(0.78);">0</span>
<span style="right:708px;top:125.52px;font-size:8.2px;line-height:10px;color:#222;font-weight:normal;transform-origin:100% 50%;transform:scaleX(0.78);">460</span>
<span id="t37" style="left:37px;top:136.02px;font-size:8.5px;line-height:10px;color:#222;font-weight:normal;transform:scaleX(0.9505);">3</span>
<span style="right:708px;top:136.52px;font-size:8.2px;line-height:10px;color:#222;font-weight:normal;transform-origin:100% 50%;transform:scaleX(0.78);">-3500</span>
<span style="right:708px;top:146.52px;font-size:8.2px;line-height:10px;color:#222;font-weight:normal;transform-origin:100% 50%;transform:scaleX(0.78);">460</span>
<span id="t38" style="left:37px;top:157.02px;font-size:8.5px;line-height:10px;color:#222;font-weight:normal;transform:scaleX(0.9505);">5</span>
<span style="right:708px;top:157.52px;font-size:8.2px;line-height:10px;color:#222;font-weight:normal;transform-origin:100% 50%;transform:scaleX(0.78);">0</span>
<span style="right:708px;top:168.52px;font-size:8.2px;line-height:10px;color:#222;font-weight:normal;transform-origin:100% 50%;transform:scaleX(0.78);">520</span>
<span id="t39" style="left:37px;top:179.02px;font-size:8.5px;line-height:10px;color:#222;font-weight:normal;transform:scaleX(0.9505);">7</span>
<span style="right:708px;top:179.52px;font-size:8.2px;line-height:10px;color:#222;font-weight:normal;transform-origin:100% 50%;transform:scaleX(0.78);">-4500</span>
<span style="right:708px;top:189.52px;font-size:8.2px;line-height:10px;color:#222;font-weight:normal;transform-origin:100% 50%;transform:scaleX(0.78);">520</span>
<span id="t40" style="left:37px;top:200.02px;font-size:8.5px;line-height:10px;color:#222;font-weight:normal;transform:scaleX(0.9505);">9</span>
<span style="right:708px;top:200.52px;font-size:8.2px;line-height:10px;color:#222;font-weight:normal;transform-origin:100% 50%;transform:scaleX(0.78);">0</span>
<span style="right:708px;top:211.52px;font-size:8.2px;line-height:10px;color:#222;font-weight:normal;transform-origin:100% 50%;transform:scaleX(0.78);">550</span>
<span id="t41" style="left:37px;top:222.02px;font-size:8.5px;line-height:10px;color:#222;font-weight:normal;transform:scaleX(0.9288);">11</span>
<span style="right:708px;top:222.52px;font-size:8.2px;line-height:10px;color:#222;font-weight:normal;transform-origin:100% 50%;transform:scaleX(0.78);">6000</span>
<span style="right:708px;top:232.52px;font-size:8.2px;line-height:10px;color:#222;font-weight:normal;transform-origin:100% 50%;transform:scaleX(0.78);">550</span>
<span id="t42" style="left:37px;top:243.02px;font-size:8.5px;line-height:10px;color:#222;font-weight:normal;transform:scaleX(0.8660);">13</span>
<span style="right:708px;top:243.52px;font-size:8.2px;line-height:10px;color:#222;font-weight:normal;transform-origin:100% 50%;transform:scaleX(0.78);">0</span>
<span style="right:708px;top:254.52px;font-size:8.2px;line-height:10px;color:#222;font-weight:normal;transform-origin:100% 50%;transform:scaleX(0.78);">430</span>
<span id="t43" style="left:37px;top:265.02px;font-size:8.5px;line-height:10px;color:#222;font-weight:normal;transform:scaleX(0.8660);">15</span>
<span style="right:708px;top:265.52px;font-size:8.2px;line-height:10px;color:#222;font-weight:normal;transform-origin:100% 50%;transform:scaleX(0.78);">-3000</span>
<span style="right:708px;top:275.52px;font-size:8.2px;line-height:10px;color:#222;font-weight:normal;transform-origin:100% 50%;transform:scaleX(0.78);">430</span>
<span style="right:708px;top:286.52px;font-size:8.2px;line-height:10px;color:#222;font-weight:normal;transform-origin:100% 50%;transform:scaleX(0.78);">440</span>
<span id="t44" style="left:37px;top:297.02px;font-size:8.5px;line-height:10px;color:#222;font-weight:normal;transform:scaleX(0.8660);">18</span>
<span style="right:708px;top:297.52px;font-size:8.2px;line-height:10px;color:#222;font-weight:normal;transform-origin:100% 50%;transform:scaleX(0.78);">3200</span>
<span style="right:708px;top:308.52px;font-size:8.2px;line-height:10px;color:#222;font-weight:normal;transform-origin:100% 50%;transform:scaleX(0.78);">440</span>
<span id="t45" style="left:37px;top:318.02px;font-size:8.5px;line-height:10px;color:#222;font-weight:normal;transform:scaleX(0.8660);">20</span>
<span style="right:708px;top:318.52px;font-size:8.2px;line-height:10px;color:#222;font-weight:normal;transform-origin:100% 50%;transform:scaleX(0.78);">0</span>
<span style="right:708px;top:329.52px;font-size:8.2px;line-height:10px;color:#222;font-weight:normal;transform-origin:100% 50%;transform:scaleX(0.78);">210</span>
<span id="t46" style="left:37px;top:340.02px;font-size:8.5px;line-height:10px;color:#222;font-weight:normal;transform:scaleX(0.8660);">22</span>
<span style="right:708px;top:340.52px;font-size:8.2px;line-height:10px;color:#222;font-weight:normal;transform-origin:100% 50%;transform:scaleX(0.78);">-1550</span>
<span style="right:708px;top:351.52px;font-size:8.2px;line-height:10px;color:#222;font-weight:normal;transform-origin:100% 50%;transform:scaleX(0.78);">210</span>
<span id="t47" style="left:37px;top:361.02px;font-size:8.5px;line-height:10px;color:#222;font-weight:normal;transform:scaleX(0.8660);">24</span>
<span style="right:708px;top:361.52px;font-size:8.2px;line-height:10px;color:#222;font-weight:normal;transform-origin:100% 50%;transform:scaleX(0.78);">0</span>
<span style="right:708px;top:372.52px;font-size:8.2px;line-height:10px;color:#222;font-weight:normal;transform-origin:100% 50%;transform:scaleX(0.78);">210</span>
<span id="t48" style="left:37px;top:383.02px;font-size:8.5px;line-height:10px;color:#222;font-weight:normal;transform:scaleX(0.8660);">26</span>
<span style="right:708px;top:383.52px;font-size:8.2px;line-height:10px;color:#222;font-weight:normal;transform-origin:100% 50%;transform:scaleX(0.78);">1550</span>
<span style="right:708px;top:394.52px;font-size:8.2px;line-height:10px;color:#222;font-weight:normal;transform-origin:100% 50%;transform:scaleX(0.78);">210</span>
<span id="t49" style="left:37px;top:404.02px;font-size:8.5px;line-height:10px;color:#222;font-weight:normal;transform:scaleX(0.8660);">28</span>
<span style="right:708px;top:404.52px;font-size:8.2px;line-height:10px;color:#222;font-weight:normal;transform-origin:100% 50%;transform:scaleX(0.78);">0</span>
<span style="right:708px;top:415.52px;font-size:8.2px;line-height:10px;color:#222;font-weight:normal;transform-origin:100% 50%;transform:scaleX(0.78);">530</span>
<span id="t50" style="left:37px;top:426.02px;font-size:8.5px;line-height:10px;color:#222;font-weight:normal;transform:scaleX(0.8660);">30</span>
<span style="right:708px;top:426.52px;font-size:8.2px;line-height:10px;color:#222;font-weight:normal;transform-origin:100% 50%;transform:scaleX(0.78);">-4800</span>
<span style="right:708px;top:437.52px;font-size:8.2px;line-height:10px;color:#222;font-weight:normal;transform-origin:100% 50%;transform:scaleX(0.78);">370</span>
<span style="right:708px;top:447.52px;font-size:8.2px;line-height:10px;color:#222;font-weight:normal;transform-origin:100% 50%;transform:scaleX(0.78);">180</span>
<span id="t51" style="left:37px;top:458.02px;font-size:8.5px;line-height:10px;color:#222;font-weight:normal;transform:scaleX(0.8660);">33</span>
<span style="right:708px;top:458.52px;font-size:8.2px;line-height:10px;color:#222;font-weight:normal;transform-origin:100% 50%;transform:scaleX(0.78);">4550</span>
<span style="right:708px;top:469.52px;font-size:8.2px;line-height:10px;color:#222;font-weight:normal;transform-origin:100% 50%;transform:scaleX(0.78);">180</span>
<span style="right:708px;top:480.52px;font-size:8.2px;line-height:10px;color:#222;font-weight:normal;transform-origin:100% 50%;transform:scaleX(0.78);">180</span>
<span id="t52" style="left:37px;top:490.02px;font-size:8.5px;line-height:10px;color:#222;font-weight:normal;transform:scaleX(0.8660);">36</span>
<span style="right:708px;top:490.52px;font-size:8.2px;line-height:10px;color:#222;font-weight:normal;transform-origin:100% 50%;transform:scaleX(0.78);">-800</span>
<span style="right:708px;top:501.52px;font-size:8.2px;line-height:10px;color:#222;font-weight:normal;transform-origin:100% 50%;transform:scaleX(0.78);">180</span>
<span id="t53" style="left:37px;top:512.02px;font-size:8.5px;line-height:10px;color:#222;font-weight:normal;transform:scaleX(0.8660);">38</span>
<span style="right:708px;top:512.52px;font-size:8.2px;line-height:10px;color:#222;font-weight:normal;transform-origin:100% 50%;transform:scaleX(0.78);">0</span>
<div style="left:95.8px;top:100.7px;width:98px;height:596.3px;background:#f0eff1;"></div>
<div style="left:95.2px;top:100.7px;width:0.7px;height:596.3px;background:#c2c2c2;"></div>
<div style="left:99.2px;top:102.7px;width:43.2px;height:11.5px;background:#fff;box-sizing:border-box;border:1px solid #b4b4b4;border-radius:1px;"></div>
<div style="left:133.4px;top:103.7px;width:7.9px;height:9.5px;background:#e3e3e3;"></div>
<svg style="left:135.3px;top:104.25px;" width="5" height="8.4" viewBox="0 0 5 8.4"><path d="M0.6 3L2.4 1L4.2 3Z" fill="#222"/><path d="M0.6 5.4L2.4 7.4L4.2 5.4Z" fill="#222"/></svg>
<div style="left:133.2px;top:103.5px;width:0.7px;height:9.9px;background:#c8c8c8;"></div>
<span style="right:667.8px;top:103.52px;font-size:8.2px;line-height:10px;color:#222;font-weight:normal;transform-origin:100% 50%;transform:scaleX(0.78);">0</span>
<div style="left:99.2px;top:118px;width:43.2px;height:11.3px;background:#fff;box-sizing:border-box;border:1px solid #b4b4b4;border-radius:1px;"></div>
<div style="left:133.4px;top:119px;width:7.9px;height:9.3px;background:#e3e3e3;"></div>
<svg style="left:135.3px;top:119.45px;" width="5" height="8.4" viewBox="0 0 5 8.4"><path d="M0.6 3L2.4 1L4.2 3Z" fill="#222"/><path d="M0.6 5.4L2.4 7.4L4.2 5.4Z" fill="#222"/></svg>
<div style="left:133.2px;top:118.8px;width:0.7px;height:9.7px;background:#c8c8c8;"></div>
<span style="right:667.8px;top:118.52px;font-size:8.2px;line-height:10px;color:#222;font-weight:normal;transform-origin:100% 50%;transform:scaleX(0.78);">0</span>
<div style="left:158.2px;top:119.6px;width:28.2px;height:9.4px;background:#fdfdfd;border-radius:3px;box-shadow:0 0 0 0.7px #d6d6d6;"></div>
<span id="t54" style="left:165.8px;top:119.52px;font-size:8.1px;line-height:10px;color:#222;font-weight:normal;transform:scaleX(0.8525);">V1/2</span>
<div style="left:99px;top:135.2px;width:6px;height:11.4px;background:#fdfdfd;border-radius:3px;box-shadow:0 0 0 0.7px #d6d6d6;"></div>
<span style="left:99.9px;top:135.8px;font-size:8px;line-height:9px;color:#222;font-weight:bold;">+</span>
<div style="left:110.2px;top:134.2px;width:42.3px;height:11.6px;background:#fff;box-sizing:border-box;border:1px solid #b4b4b4;border-radius:1px;"></div>
<div style="left:143.5px;top:135.2px;width:7.9px;height:9.6px;background:#e3e3e3;"></div>
<svg style="left:145.4px;top:135.8px;" width="5" height="8.4" viewBox="0 0 5 8.4"><path d="M0.6 3L2.4 1L4.2 3Z" fill="#222"/><path d="M0.6 5.4L2.4 7.4L4.2 5.4Z" fill="#222"/></svg>
<div style="left:143.3px;top:135px;width:0.7px;height:10px;background:#c8c8c8;"></div>
<span style="right:657.7px;top:135.52px;font-size:8.2px;line-height:10px;color:#222;font-weight:normal;transform-origin:100% 50%;transform:scaleX(0.78);">0</span>
<div style="left:157.6px;top:133.9px;width:11.6px;height:11.9px;background:#fdfdfd;border-radius:3px;box-shadow:0 0 0 0.7px #d6d6d6;"></div>
<div style="left:174px;top:133.9px;width:16.2px;height:11.9px;background:#fdfdfd;border-radius:3px;box-shadow:0 0 0 0.7px #d6d6d6;"></div>
<svg style="left:159px;top:135.4px;" width="9.6" height="9" viewBox="0 0 9.6 9"><rect x="5" y="0.6" width="4.2" height="7.8" fill="#c8ccd4"/><path d="M0.4 1.4H5.6M0.4 4.5H8M0.4 7.6H5.6M5.6 1.4V7.6" stroke="#111" stroke-width="1" fill="none"/><path d="M6 3.6L8.8 4.5L6 5.4Z" fill="#1a1ab4"/></svg>
<svg style="left:177px;top:135.4px;" width="10.6" height="9" viewBox="0 0 10.6 9"><rect x="4.6" y="0.6" width="5.4" height="7.8" fill="#c8ccd4"/><path d="M0.4 1.4H4.8M0.4 4.5H5.4M0.4 7.6H4.8M4.8 1.4V7.6" stroke="#111" stroke-width="1" fill="none"/><path d="M9.4 3.2Q6.4 2.6 6.4 4.6Q6.4 6.4 9.4 5.8" stroke="#1a1ab4" stroke-width="1.1" fill="none"/></svg>
<div style="left:99.2px;top:149.5px;width:43.2px;height:11.3px;background:#fff;box-sizing:border-box;border:1px solid #b4b4b4;border-radius:1px;"></div>
<div style="left:133.4px;top:150.5px;width:7.9px;height:9.3px;background:#e3e3e3;"></div>
<svg style="left:135.3px;top:150.95px;" width="5" height="8.4" viewBox="0 0 5 8.4"><path d="M0.6 3L2.4 1L4.2 3Z" fill="#222"/><path d="M0.6 5.4L2.4 7.4L4.2 5.4Z" fill="#222"/></svg>
<div style="left:133.2px;top:150.3px;width:0.7px;height:9.7px;background:#c8c8c8;"></div>
<span style="right:667.8px;top:150.52px;font-size:8.2px;line-height:10px;color:#222;font-weight:normal;transform-origin:100% 50%;transform:scaleX(0.78);">0</span>
<span id="t55" style="left:143.8px;top:150.52px;font-size:8.1px;line-height:10px;color:#222;font-weight:normal;transform:scaleX(0.8045);">Krok</span>
<div style="left:159.8px;top:149.5px;width:30.4px;height:11.3px;background:#fff;box-sizing:border-box;border:1px solid #b4b4b4;border-radius:1px;"></div>
<div style="left:181.2px;top:150.5px;width:7.9px;height:9.3px;background:#e3e3e3;"></div>
<svg style="left:183.1px;top:150.95px;" width="5" height="8.4" viewBox="0 0 5 8.4"><path d="M0.6 3L2.4 1L4.2 3Z" fill="#222"/><path d="M0.6 5.4L2.4 7.4L4.2 5.4Z" fill="#222"/></svg>
<div style="left:181px;top:150.3px;width:0.7px;height:9.7px;background:#c8c8c8;"></div>
<span style="right:620px;top:150.52px;font-size:8.2px;line-height:10px;color:#222;font-weight:normal;transform-origin:100% 50%;transform:scaleX(0.78);">10</span>
<div style="left:99.2px;top:165.2px;width:43.2px;height:11.4px;background:#fff;box-sizing:border-box;border:1px solid #b4b4b4;border-radius:1px;"></div>
<div style="left:133.4px;top:166.2px;width:7.9px;height:9.4px;background:#e3e3e3;"></div>
<svg style="left:135.3px;top:166.7px;" width="5" height="8.4" viewBox="0 0 5 8.4"><path d="M0.6 3L2.4 1L4.2 3Z" fill="#222"/><path d="M0.6 5.4L2.4 7.4L4.2 5.4Z" fill="#222"/></svg>
<div style="left:133.2px;top:166px;width:0.7px;height:9.8px;background:#c8c8c8;"></div>
<span style="right:667.8px;top:166.52px;font-size:8.2px;line-height:10px;color:#222;font-weight:normal;transform-origin:100% 50%;transform:scaleX(0.78);">460</span>
<div style="left:150.2px;top:165.2px;width:40px;height:11.4px;background:#e6e6e6;box-sizing:border-box;border:1px solid #c6c6c6;border-radius:1px;"></div>
<div style="left:181.2px;top:166.2px;width:7.9px;height:9.4px;background:#e0e0e0;"></div>
<svg style="left:183.1px;top:166.7px;" width="5" height="8.4" viewBox="0 0 5 8.4"><path d="M0.6 3L2.4 1L4.2 3Z" fill="#9a9a9a"/><path d="M0.6 5.4L2.4 7.4L4.2 5.4Z" fill="#9a9a9a"/></svg>
<div style="left:181px;top:166px;width:0.7px;height:9.8px;background:#c8c8c8;"></div>
<span style="right:620px;top:166.52px;font-size:8.2px;line-height:10px;color:#8d8d8d;font-weight:normal;transform-origin:100% 50%;transform:scaleX(0.78);">3567</span>
<div style="left:100.2px;top:182.2px;width:34.6px;height:11px;background:#fdfdfd;border-radius:3px;box-shadow:0 0 0 0.7px #d6d6d6;"></div>
<span id="t56" style="left:104.4px;top:182.52px;font-size:8.1px;line-height:10px;color:#222;font-weight:normal;transform:scaleX(0.8568);">Spojitost</span>
<div style="left:137.4px;top:182.2px;width:20.8px;height:11px;background:#fdfdfd;border-radius:3px;box-shadow:0 0 0 0.7px #d6d6d6;"></div>
<span id="t57" style="left:141.2px;top:182.52px;font-size:8.1px;line-height:10px;color:#222;font-weight:normal;transform:scaleX(0.8393);">Zpět</span>
<div style="left:160.6px;top:182.2px;width:29.6px;height:11px;background:#fdfdfd;border-radius:3px;box-shadow:0 0 0 0.7px #d6d6d6;"></div>
<span id="t58" style="left:170.2px;top:182.52px;font-size:8.1px;line-height:10px;color:#222;font-weight:normal;transform:scaleX(0.9228);">OK</span>
<span id="t59" style="left:96.8px;top:203.52px;font-size:8.1px;line-height:10px;color:#222;font-weight:normal;transform:scaleX(0.8137);">Počátek</span>
<div style="left:122.2px;top:204.7px;width:53.6px;height:10.2px;background:#fff;box-sizing:border-box;border-bottom:1px solid #bdbdbd;border-radius:1px;"></div>
<span style="right:625.4px;top:205.52px;font-size:8.2px;line-height:10px;color:#222;font-weight:normal;transform-origin:100% 50%;transform:scaleX(0.78);">146.249024</span>
<div style="left:178.6px;top:205.6px;width:11.2px;height:9.2px;background:#fdfdfd;border-radius:3px;box-shadow:0 0 0 0.7px #d6d6d6;"></div>
<span id="t60" style="left:181.4px;top:205.52px;font-size:7px;line-height:8px;color:#222;font-weight:normal;transform:scaleX(0.9241);">...</span>
<div style="left:101.4px;top:227.2px;width:88.8px;height:12.1px;background:#fdfdfd;border-radius:3px;box-shadow:0 0 0 0.7px #d6d6d6;"></div>
<span id="t61" style="left:111.4px;top:228.52px;font-size:8.1px;line-height:10px;color:#222;font-weight:normal;transform:scaleX(0.8405);">Název trasy a připojeni</span>
<span id="t62" style="left:97.8px;top:246.52px;font-size:8.1px;line-height:10px;color:#222;font-weight:normal;transform:scaleX(0.8424);">Aktivní trasa a cesta</span>
<div style="left:97.6px;top:259.6px;width:91.8px;height:10.8px;background:#f4f4f4;box-sizing:border-box;border-bottom:1px solid #b4b4b4;border-top:1px solid #e6e6e6;"></div>
<span id="t63" style="left:99px;top:260.52px;font-size:8.1px;line-height:10px;color:#222;font-weight:normal;transform:scaleX(0.7991);">101</span>
<div style="left:97.6px;top:275.2px;width:91.8px;height:10.8px;background:#f4f4f4;box-sizing:border-box;border-bottom:1px solid #b4b4b4;border-top:1px solid #e6e6e6;"></div>
<span id="t64" style="left:99px;top:276.52px;font-size:8.1px;line-height:10px;color:#222;font-weight:normal;transform:scaleX(0.8295);">D:\_RPdata\test</span>
<div style="left:247.2px;top:230.2px;width:399.4px;height:14.4px;background:#4a5462;"></div>
<div style="left:646.6px;top:230.2px;width:7.6px;height:14.4px;background:#3f4854;"></div>
<div style="left:248.1px;top:231.8px;width:0.8px;height:11.2px;background:#6f7884;"></div>
<div style="left:250.5px;top:231.8px;width:0.8px;height:11.2px;background:#6f7884;"></div>
<div style="left:283px;top:231.4px;width:2.7px;height:12px;background:#6f7884;"></div>
<div style="left:532px;top:231.4px;width:2.7px;height:12px;background:#6f7884;"></div>
<div style="left:552px;top:231.4px;width:2.7px;height:12px;background:#6f7884;"></div>
<div style="left:572px;top:231.4px;width:2.7px;height:12px;background:#6f7884;"></div>
<svg style="left:647.4px;top:231px;" width="6.4" height="6.4" viewBox="0 0 6.4 6.4"><path d="M0.8 0.8L5.6 5.6M5.6 0.8L0.8 5.6" stroke="#fff" stroke-width="1.3"/></svg>
<svg style="left:254px;top:232.6px" width="10" height="9.8" viewBox="0 0 10 10" preserveAspectRatio="none"><path d="M4 1H9.4V6.4L6.8 8.6L4.6 5Z" fill="#a04448" fill-opacity="0.75"/><path d="M0.8 0.8L2.2 5.2L6 8.8" stroke="#141414" stroke-width="1.5" fill="none"/><circle cx="0.9" cy="0.9" r="0.9" fill="#141414"/><circle cx="6.2" cy="9" r="0.9" fill="#141414"/></svg>
<svg style="left:268px;top:232.6px" width="10" height="9.8" viewBox="0 0 10 10" preserveAspectRatio="none"><path d="M1 6.4Q1 3 5 0.8Q9 3 9 6.4" stroke="#141f96" stroke-width="1.9" fill="none"/><rect x="0.4" y="7.6" width="5" height="1.7" fill="#2fce3c"/><ellipse cx="7.6" cy="6.4" rx="2.1" ry="1.7" fill="#c43434"/></svg>
<svg style="left:290px;top:232.6px" width="8" height="9.8" viewBox="0 0 10 10" preserveAspectRatio="none"><path d="M1.4 1.2Q0.6 4 4.4 5Q8.4 6 7.4 9" stroke="#c43434" stroke-width="1.6" fill="none"/></svg>
<svg style="left:302px;top:232.6px" width="10" height="9.8" viewBox="0 0 10 10" preserveAspectRatio="none"><ellipse cx="1.6" cy="3.2" rx="1.6" ry="2" fill="#b84848"/><path d="M8.6 2.2Q5.6 0.2 4 2.4Q3.4 4.4 6.2 5.2Q9.2 6.2 7.8 8.2Q5 9.8 1.6 7.8" stroke="#1a2f88" stroke-width="3" fill="none"/></svg>
<svg style="left:316px;top:232.6px" width="10" height="9.8" viewBox="0 0 10 10" preserveAspectRatio="none"><ellipse cx="1.6" cy="3.2" rx="1.6" ry="2" fill="#b84848"/><path d="M8.6 2.2Q5.6 0.2 4 2.4Q3.4 4.4 6.2 5.2Q9.2 6.2 7.8 8.2Q5 9.8 1.6 7.8" stroke="#1a2f88" stroke-width="3" fill="none"/></svg>
<svg style="left:330px;top:232.6px" width="10" height="9.8" viewBox="0 0 10 10" preserveAspectRatio="none"><ellipse cx="1.6" cy="3.2" rx="1.6" ry="2" fill="#b84848"/><path d="M8.6 2.2Q5.6 0.2 4 2.4Q3.4 4.4 6.2 5.2Q9.2 6.2 7.8 8.2Q5 9.8 1.6 7.8" stroke="#1a2f88" stroke-width="3" fill="none"/></svg>
<svg style="left:346px;top:232.6px" width="8.6" height="9.8" viewBox="0 0 10 10" preserveAspectRatio="none"><path d="M5 1L5.8 4.2L9 5L5.8 5.8L5 9L4.2 5.8L1 5L4.2 4.2Z" fill="#141414"/><path d="M1 1.4L3.2 3.6" stroke="#c43434" stroke-width="1.3"/><circle cx="5" cy="5" r="0.9" fill="#a89060"/></svg>
<svg style="left:360px;top:232.6px" width="10" height="9.8" viewBox="0 0 10 10" preserveAspectRatio="none"><path d="M1 0.8L6.4 6.6" stroke="#c43434" stroke-width="2"/><path d="M4 9.4L9.4 4.4M5 6L8 9" stroke="#141414" stroke-width="1.2"/><circle cx="6.4" cy="6.8" r="0.8" fill="#e0c040"/></svg>
<svg style="left:375px;top:232.6px" width="9.4" height="9.8" viewBox="0 0 10 10" preserveAspectRatio="none"><circle cx="3.4" cy="3.4" r="3" fill="#c43434"/><path d="M2 9.6L9.4 3.2M4.6 5.6L8 9" stroke="#141414" stroke-width="1.2"/><circle cx="5.8" cy="6.4" r="0.8" fill="#e08030"/></svg>
<svg style="left:388.4px;top:232.6px" width="10" height="9.8" viewBox="0 0 10 10" preserveAspectRatio="none"><path d="M0.6 2Q2.6 -0.4 4.6 1.6Q6.6 -0.4 8.2 2Q8.6 5 4.6 8Q0.4 5 0.6 2Z" fill="#f0d8d8" stroke="#c03c40" stroke-width="1"/><path d="M2.6 2.6L6.4 5.4M4.4 1.8L7 4" stroke="#c03c40" stroke-width="0.7"/><path d="M5 9.6L10 5" stroke="#141414" stroke-width="1.2"/></svg>
<svg style="left:404px;top:232.6px" width="8.6" height="9.8" viewBox="0 0 10 10" preserveAspectRatio="none"><path d="M2.4 0.6L1.6 4.4L3.6 6" stroke="#b0383c" stroke-width="1.6" fill="none"/><circle cx="6.2" cy="4.6" r="0.9" fill="#141414"/><circle cx="3.2" cy="7.8" r="0.9" fill="#141414"/><circle cx="7.6" cy="8.8" r="0.9" fill="#c05828"/><circle cx="5.6" cy="6.6" r="0.7" fill="#141414"/></svg>
<svg style="left:417px;top:232.6px" width="10" height="9.8" viewBox="0 0 10 10" preserveAspectRatio="none"><path d="M1 0.8L6.4 6.4" stroke="#c43434" stroke-width="2.1"/><path d="M3.4 9.6L9.6 3.6" stroke="#141414" stroke-width="1.2"/><path d="M5.4 6.6L7.6 8.6" stroke="#a03438" stroke-width="1"/></svg>
<svg style="left:432px;top:232.6px" width="9.4" height="9.8" viewBox="0 0 10 10" preserveAspectRatio="none"><rect x="0.2" y="0.6" width="9.6" height="8.8" fill="#f4eaea" stroke="#c4383c" stroke-width="1"/><path d="M2.6 1V6.4M5 1V6.4M7.4 1V6.4" stroke="#c4383c" stroke-width="1.2"/></svg>
<svg style="left:445px;top:232.6px" width="10" height="9.8" viewBox="0 0 10 10" preserveAspectRatio="none"><path d="M1.6 3.6L5 6.4L9.4 3.4M5 6.4L3.6 9.8" stroke="#141414" stroke-width="1.3" fill="none"/><circle cx="2" cy="1.6" r="1.1" fill="#d07030"/></svg>
<svg style="left:460.6px;top:232.6px" width="9" height="9.8" viewBox="0 0 10 10" preserveAspectRatio="none"><rect x="1.2" y="1.2" width="7.6" height="7.6" fill="#f6f6f6"/><path d="M0.2 0.2H2.8V2.8H0.2ZM7.2 0.2H9.8V2.8H7.2ZM0.2 7.2H2.8V9.8H0.2ZM7.2 7.2H9.8V9.8H7.2Z" fill="#141414"/><circle cx="5" cy="5" r="0.9" fill="#c06060"/></svg>
<svg style="left:475px;top:232.6px" width="8.8" height="9.8" viewBox="0 0 10 10" preserveAspectRatio="none"><path d="M0.6 3L4.6 5L8.6 0.8M4.6 5L5.6 9.6M4.6 5L1.6 8" stroke="#141414" stroke-width="1.3" fill="none"/><path d="M4 2.4L6.4 3.4L5 6Z" fill="#e07820"/></svg>
<svg style="left:488.6px;top:232.6px" width="10" height="9.8" viewBox="0 0 10 10" preserveAspectRatio="none"><path d="M1.2 0.8L2.6 8.2H9.4" stroke="#c43434" stroke-width="1.5" fill="none"/><path d="M4 3.2L8.6 1.6M4.4 5.6L8 4.6" stroke="#f2f2f2" stroke-width="1.3"/></svg>
<svg style="left:503.6px;top:232.6px" width="9.4" height="9.8" viewBox="0 0 10 10" preserveAspectRatio="none"><path d="M0.8 1.2H8.8L6.6 9.4" stroke="#c43434" stroke-width="1.5" fill="none"/><path d="M2 4L6.4 3.4M1.6 7L5.6 6.2" stroke="#f2f2f2" stroke-width="1.3"/></svg>
<svg style="left:517.2px;top:232.6px" width="9.8" height="10" viewBox="0 0 10 10" preserveAspectRatio="none"><rect x="0.5" y="0.5" width="9" height="9" fill="#c9704e" stroke="#2a2320" stroke-width="1"/></svg>
<svg style="left:536.6px;top:232.6px" width="10" height="9.8" viewBox="0 0 10 10" preserveAspectRatio="none"><path d="M0.8 8.4Q2.6 2.6 8 2.4" stroke="#f2f2f2" stroke-width="1.8" fill="none"/><path d="M2 9.4Q4.4 5 9.6 5.4" stroke="#1f9a2c" stroke-width="1.4" fill="none"/><path d="M5.4 0.6L9.4 2.6L5.6 4.4Z" fill="#c43434"/><path d="M7.4 6L9.8 8.8" stroke="#141414" stroke-width="1.2"/></svg>
<svg style="left:557.4px;top:232.6px" width="9" height="9.8" viewBox="0 0 10 10" preserveAspectRatio="none"><path d="M2 0.6V6.6M8 0.6V6.6M2 2.2H8" stroke="#a8262a" stroke-width="1.3"/><path d="M3 3.2H7V6.6H3Z" fill="#5a2a2a"/><path d="M0.2 9.6L2.6 6.8L5 8.2L7.4 6.8L9.8 9.6Z" fill="#c8b428"/><path d="M0.2 9.6H9.8" stroke="#7a9a20" stroke-width="1"/></svg>
<svg style="left:576.6px;top:232.6px" width="10" height="9.8" viewBox="0 0 10 10" preserveAspectRatio="none"><circle cx="6.4" cy="3.6" r="2.9" fill="none" stroke="#f2f2f2" stroke-width="1.3"/><path d="M4.2 5.8L0.6 9.4" stroke="#f2f2f2" stroke-width="1.7"/></svg>
<svg style="left:591.6px;top:232.6px" width="9.4" height="9.8" viewBox="0 0 10 10" preserveAspectRatio="none"><circle cx="3.6" cy="4.6" r="3" fill="#f2f2f2" stroke="#c4383c" stroke-width="1.1"/><path d="M3.6 2V7.2M1 4.6H6.2" stroke="#c4383c" stroke-width="0.7"/><path d="M5.8 6.8L8.8 9.8" stroke="#8a1c20" stroke-width="1.4"/><path d="M6 0.2H9.6L8.4 3.6Z" fill="#c43434"/></svg>
<svg style="left:606px;top:232.6px" width="8.6" height="9.8" viewBox="0 0 10 10" preserveAspectRatio="none"><path d="M5 0.4L9.4 6.4L5 9.6L0.6 6.4Z" fill="#efe8c8"/><path d="M5 0.4L5 9.6" stroke="#8a8a8a" stroke-width="0.8"/><path d="M0.6 6.6L5 9.8L9.4 6.6" stroke="#fff" stroke-width="1.4" fill="none"/></svg>
<svg style="left:620.2px;top:232.6px" width="9.2" height="9.8" viewBox="0 0 10 10" preserveAspectRatio="none"><rect x="0.4" y="0.4" width="9.2" height="9.2" fill="#f6f0f0" stroke="#b4484c" stroke-width="0.9"/><path d="M0.6 0.6H4L9.4 6V9.4H6L0.6 4Z" fill="#e79a9a"/><path d="M0.8 0.8L9.2 9.2" stroke="#d85a5a" stroke-width="1.6"/></svg>
<svg style="left:633.6px;top:232.6px" width="10" height="9.8" viewBox="0 0 10 10" preserveAspectRatio="none"><path d="M0 1.6H10M0 5H10M0 8.4H10" stroke="#f2f2f2" stroke-width="1.5"/><path d="M0 3.2H10M0 6.6H10" stroke="#141414" stroke-width="0.9"/></svg>
<div style="left:298px;top:268.7px;width:293.4px;height:14px;background:#4a5462;"></div>
<div style="left:591.4px;top:268.7px;width:9.4px;height:14px;background:#3f4854;"></div>
<div style="left:591px;top:269.7px;width:1.8px;height:12px;background:#6b7480;"></div>
<div style="left:299.1px;top:270.3px;width:0.8px;height:10.8px;background:#6f7884;"></div>
<div style="left:301.5px;top:270.3px;width:0.8px;height:10.8px;background:#6f7884;"></div>
<div style="left:348.8px;top:269.9px;width:2.7px;height:11.6px;background:#6f7884;"></div>
<div style="left:397.4px;top:269.9px;width:2.7px;height:11.6px;background:#6f7884;"></div>
<div style="left:445.6px;top:269.9px;width:2.7px;height:11.6px;background:#6f7884;"></div>
<div style="left:465.4px;top:269.9px;width:2.7px;height:11.6px;background:#6f7884;"></div>
<div style="left:570.6px;top:269.9px;width:2.7px;height:11.6px;background:#6f7884;"></div>
<svg style="left:594.6px;top:269.4px;" width="6.4" height="6.4" viewBox="0 0 6.4 6.4"><path d="M0.8 0.8L5.6 5.6M5.6 0.8L0.8 5.6" stroke="#fff" stroke-width="1.3"/></svg>
<svg style="left:305.2px;top:271px" width="10" height="9.8" viewBox="0 0 10 10" preserveAspectRatio="none"><path d="M0.4 3H4L5 4.2H8.6V9.4H0.4Z" fill="#c8c030" stroke="#141414" stroke-width="0.9"/><path d="M2.4 5.6H10L8.4 9.4H0.6Z" fill="#e0d848" stroke="#141414" stroke-width="0.8"/><circle cx="3" cy="1.4" r="1.1" fill="#c43434"/><circle cx="7" cy="1.6" r="1.2" fill="#1c3aa8"/></svg>
<svg style="left:320.6px;top:271px" width="8.4" height="9.8" viewBox="0 0 10 10" preserveAspectRatio="none"><rect x="0.4" y="1.6" width="9.2" height="8.2" fill="#141414"/><rect x="2" y="1.8" width="6" height="3.4" fill="#d8c838"/><rect x="2.6" y="6.6" width="4.8" height="3.2" fill="#d8c838"/><rect x="4.4" y="7" width="1.4" height="2.4" fill="#141414"/><rect x="3.6" y="0" width="3.4" height="2.2" fill="#c43434"/></svg>
<svg style="left:333.8px;top:271px" width="10.4" height="9.8" viewBox="0 0 10 10" preserveAspectRatio="none"><path d="M1.4 4.6Q1.4 2.6 4 2.6H7.4Q9.6 2.6 9.6 5V8Q9.6 9.6 8 9.6H2Q0.4 9.6 0.4 8V6Q0.4 4.6 1.4 4.6Z" fill="#141414"/><rect x="1.8" y="6" width="6.4" height="1.4" fill="#cfd4da"/><rect x="2.2" y="0" width="3.2" height="3" fill="#c43434"/></svg>
<svg style="left:354.2px;top:271px" width="10" height="9.8" viewBox="0 0 10 10" preserveAspectRatio="none"><path d="M1.4 4.6Q1.4 2.6 4 2.6H7.4Q9.6 2.6 9.6 5V8Q9.6 9.6 8 9.6H2Q0.4 9.6 0.4 8V6Q0.4 4.6 1.4 4.6Z" fill="#141414"/><rect x="1.8" y="6" width="6.4" height="1.4" fill="#cfd4da"/><path d="M2 4.4L5 1L8 4.4Z" fill="#e8e8e8"/><rect x="5.4" y="0" width="3" height="3.4" fill="#c43434"/></svg>
<svg style="left:367.8px;top:271px" width="10" height="9.8" viewBox="0 0 10 10" preserveAspectRatio="none"><path d="M1.4 4.6Q1.4 2.6 4 2.6H7.4Q9.6 2.6 9.6 5V8Q9.6 9.6 8 9.6H2Q0.4 9.6 0.4 8V6Q0.4 4.6 1.4 4.6Z" fill="#141414"/><rect x="1.8" y="6" width="6.4" height="1.4" fill="#cfd4da"/><rect x="1.6" y="0" width="4.6" height="3.2" fill="#1c2ed0"/></svg>
<svg style="left:383.6px;top:271px" width="9" height="9.8" viewBox="0 0 10 10" preserveAspectRatio="none"><circle cx="6" cy="1.2" r="1.1" fill="#141414"/><path d="M5.8 2.2L4.6 5.6L8.6 9.4M4.6 5.6L0.6 8.4M5.6 3L8.8 4.4M5.4 3L3 3.8" stroke="#141414" stroke-width="1.1" fill="none"/></svg>
<svg style="left:402px;top:271px" width="10" height="9.8" viewBox="0 0 10 10" preserveAspectRatio="none"><path d="M0.8 7.6L5 2.6L7.8 5L3.8 9.8Z" fill="#c4c848"/><path d="M1.6 6.8L4.8 9M2.8 5.4L6 7.6" stroke="#141414" stroke-width="0.8"/><path d="M5.4 2.6L7.6 0.6L9.6 2.4L7.6 4.6Z" fill="#2038b0"/><path d="M0.2 9.8H4" stroke="#c4c848" stroke-width="1"/></svg>
<svg style="left:417.2px;top:271px" width="9.4" height="9.8" viewBox="0 0 10 10" preserveAspectRatio="none"><circle cx="4.4" cy="4" r="3.2" fill="#c43434" stroke="#141414" stroke-width="1.2"/><path d="M6.8 6.4L9.8 9.6" stroke="#141414" stroke-width="1.5"/><path d="M1.4 6.4V9.8M0 8H3" stroke="#1c2ed0" stroke-width="1.2"/></svg>
<svg style="left:431.8px;top:271px" width="8.6" height="9.8" viewBox="0 0 10 10" preserveAspectRatio="none"><path d="M2.4 0.8H8.4L2 9.4H8" stroke="#c43434" stroke-width="1.5" fill="none"/><path d="M0.8 9.8L9.4 0.2" stroke="#141414" stroke-width="1.3"/></svg>
<svg style="left:451.2px;top:271px" width="9" height="9.8" viewBox="0 0 10 10" preserveAspectRatio="none"><path d="M1 3.4L4.4 0.8V2.6Q9.6 2.8 9.2 7.4Q8.6 9.8 5.4 9.6" stroke="#1c30a8" stroke-width="1.5" fill="none"/><path d="M0.4 3.6L4.4 0.6V6Z" fill="#1c30a8"/><circle cx="2.4" cy="1" r="1" fill="#c43434"/></svg>
<svg style="left:470px;top:271px" width="9" height="9.8" viewBox="0 0 10 10" preserveAspectRatio="none"><path d="M9 5.4L5.6 2.8V4.6Q0.4 4.8 0.8 8.4" stroke="#1c30a8" stroke-width="1.5" fill="none"/><path d="M9.6 5.6L5.6 2.6V8.4Z" fill="#1c30a8"/><circle cx="1.6" cy="1.6" r="1.2" fill="#c43434"/><path d="M2 9.6H7" stroke="#1c30a8" stroke-width="1.2"/></svg>
<svg style="left:485px;top:271px" width="9.4" height="9.8" viewBox="0 0 10 10" preserveAspectRatio="none"><path d="M3 0.4V6.4M0 3.4H6" stroke="#141414" stroke-width="1.1"/><path d="M5 9.4H9.6M5.6 7.6V9.6M8.6 7.6V9.6" stroke="#c43434" stroke-width="1.1"/></svg>
<svg style="left:499.2px;top:271px" width="9" height="9.8" viewBox="0 0 10 10" preserveAspectRatio="none"><path d="M0.6 8Q2 1.6 9.4 1" stroke="#1c30a8" stroke-width="1.6" fill="none"/><path d="M5.4 9.4L8 5.6L8.6 9M6 6.6L9.6 7" stroke="#141414" stroke-width="0.9" fill="none"/></svg>
<svg style="left:513px;top:271px" width="10.4" height="9.8" viewBox="0 0 10 10" preserveAspectRatio="none"><path d="M3 0.4V6.4M0 3.4H6" stroke="#141414" stroke-width="1.1"/><path d="M5 0.8H9.8M7.4 0.8V3.6" stroke="#1c30a8" stroke-width="1.3"/><circle cx="7.4" cy="7" r="2" fill="none" stroke="#c43434" stroke-width="1.4"/></svg>
<svg style="left:528px;top:271px" width="9.8" height="9.8" viewBox="0 0 10 10" preserveAspectRatio="none"><path d="M3 0.4V6.4M0 3.4H6" stroke="#141414" stroke-width="1.1"/><circle cx="6.8" cy="6.8" r="2.4" fill="none" stroke="#c43434" stroke-width="1.5"/></svg>
<svg style="left:542.2px;top:271px" width="9.8" height="9.8" viewBox="0 0 10 10" preserveAspectRatio="none"><path d="M3 0.4V6.4M0 3.4H6" stroke="#141414" stroke-width="1.1"/><path d="M7 4Q9.4 4 9 6.4L7 9.6" stroke="#c43434" stroke-width="1.4" fill="none"/></svg>
<svg style="left:556.6px;top:271px" width="9" height="9.8" viewBox="0 0 10 10" preserveAspectRatio="none"><path d="M0.6 9.6L4.6 0.4" stroke="#1c30a8" stroke-width="1.3"/><path d="M3 5.4L8 3.6M8.8 2H5.6M5.4 6.4Q9.4 6 8.6 9.4" stroke="#c43434" stroke-width="1.1" fill="none"/></svg>
<svg style="left:577px;top:271px" width="8.2" height="8.8" viewBox="0 0 10 10" preserveAspectRatio="none"><circle cx="5" cy="5" r="4.8" fill="#8a1014"/><circle cx="5" cy="5" r="4" fill="#e02a30"/><path d="M3 3L7 7M7 3L3 7" stroke="#fff" stroke-width="1.5"/></svg>
</div></body></html>
